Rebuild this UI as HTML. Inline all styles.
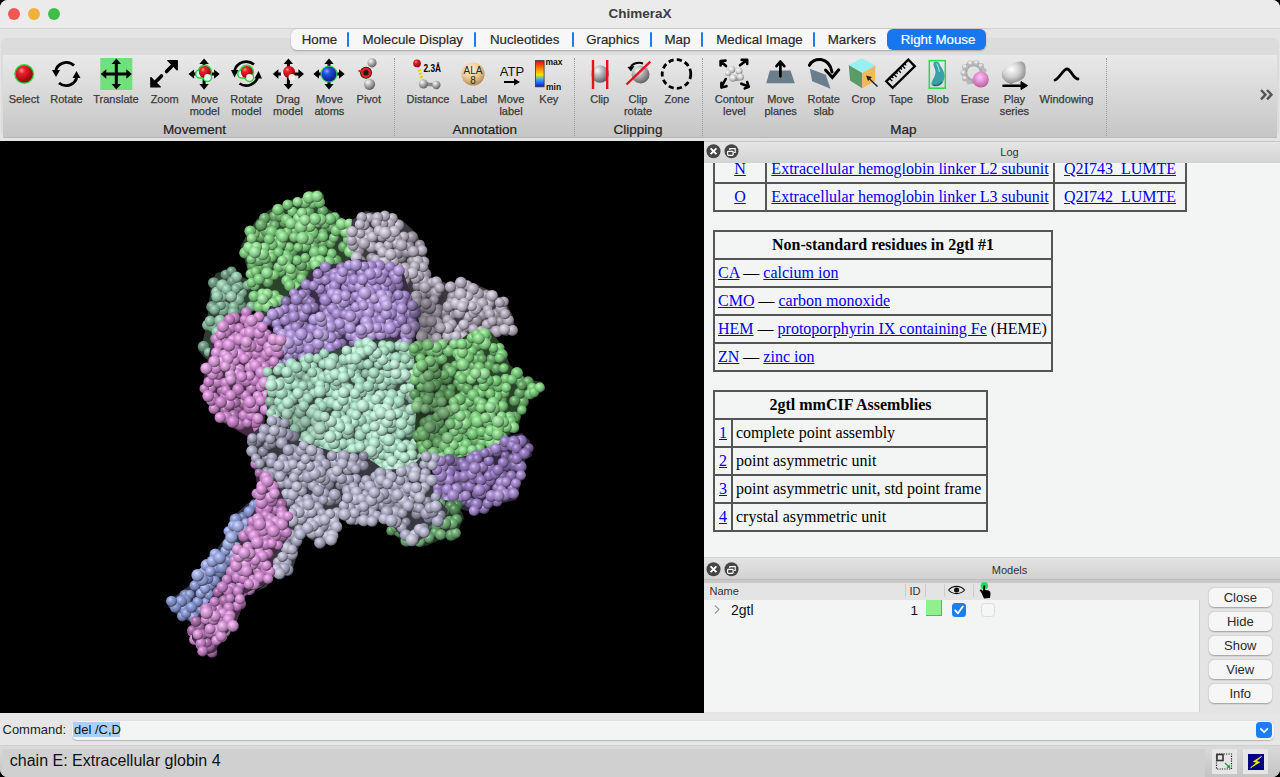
<!DOCTYPE html>
<html><head><meta charset="utf-8">
<style>
*{box-sizing:border-box;margin:0;padding:0}
html,body{width:1280px;height:777px;overflow:hidden;background:#000;font-family:"Liberation Sans",sans-serif}
.a{position:absolute}
#win{position:absolute;left:0;top:0;width:1280px;height:777px;background:#e6e6e6;border-radius:8px;overflow:hidden}
#title{left:0;top:0;width:1280px;height:29px;background:#ebebeb;border-bottom:1px solid #d2d2d2}
#title .t{left:0;width:1280px;top:6px;text-align:center;font-weight:bold;font-size:13.5px;color:#3c3c3c}
.tl{width:12px;height:12px;border-radius:50%;top:8px}
#tbar{left:0;top:29px;width:1280px;height:112px;background:#e4e4e4}
#tabbg{left:1px;top:38px;width:1278px;height:99px;background:#dcdcdc;border-radius:6px}
#panel{left:3px;top:55px;width:1274px;height:82.5px;background:linear-gradient(#e9e9e9,#c6c6c6);border-bottom:1.5px solid #b8b8b8}
#tabs{left:291px;top:29px;width:695px;height:21px;background:#f7f7f7;border-radius:6px;box-shadow:0 0.5px 1.5px rgba(0,0,0,0.25)}
.tab{top:2px;height:17px;line-height:17px;font-size:13.3px;color:#2a2a2a;-webkit-text-stroke:0.2px currentColor;text-align:center;white-space:nowrap}
.sep{top:3px;width:2px;height:15px;background:#1a7cf0;border-radius:1px}
.ic{font-size:11px;color:#3a3a3a;-webkit-text-stroke:0.25px #3a3a3a;text-align:center;line-height:12px;white-space:nowrap}
.grp{font-size:13.5px;color:#1e1e1e;-webkit-text-stroke:0.2px #1e1e1e;text-align:center}
.dsep{top:58px;height:78px;width:0;border-left:1px dotted #9a9a9a}
#gfx{left:0;top:141px;width:704px;height:572px;background:#000}
#log{left:704px;top:141px;width:576px;height:418px;background:#f2f5f4;overflow:hidden}
.ph{height:22px;width:576px;background:linear-gradient(#e6e6e6,#d3d3d3);font-size:11px;color:#333;line-height:21px}
.pbtn{width:14px;height:14px;border-radius:50%;background:#444;top:4px}
.mh{font-size:11px;color:#333}
.mb{width:62.5px;height:19px;background:#f6f6f6;border-radius:5px;box-shadow:0 0.5px 1.5px rgba(0,0,0,0.3);font-size:13px;color:#2a2a2a;text-align:center;line-height:19px}
</style></head><body>
<div id="win">
 <div id="title" class="a"><div class="a t">ChimeraX</div>
  <div class="a tl" style="left:8px;background:#ee5a52"></div>
  <div class="a tl" style="left:28px;background:#f0b23b"></div>
  <div class="a tl" style="left:48px;background:#3dbf48"></div>
 </div>
 <div id="tbar" class="a"></div>
 <div id="tabbg" class="a"></div>
 <div id="panel" class="a"></div>
 <div id="tabs" class="a"><div class="a sep" style="left:56.3px"></div><div class="a sep" style="left:183.4px"></div><div class="a sep" style="left:280.5px"></div><div class="a sep" style="left:359.2px"></div><div class="a sep" style="left:410.4px"></div><div class="a sep" style="left:522.4px"></div><div class="a tab" style="left:-31.6px;width:120px">Home</div><div class="a tab" style="left:61.7px;width:120px">Molecule Display</div><div class="a tab" style="left:173.7px;width:120px">Nucleotides</div><div class="a tab" style="left:261.8px;width:120px">Graphics</div><div class="a tab" style="left:326.4px;width:120px">Map</div><div class="a tab" style="left:408.5px;width:120px">Medical Image</div><div class="a tab" style="left:500.8px;width:120px">Markers</div><div class="a" style="left:596px;top:0;width:98.5px;height:21px;background:#1877ee;border-radius:6px"></div><div class="a tab" style="left:587.0px;width:120px;color:#fff">Right Mouse</div></div>
 <div class="a ic" style="left:-16.0px;width:80px;top:93px">Select</div><div class="a ic" style="left:26.5px;width:80px;top:93px">Rotate</div><div class="a ic" style="left:76.0px;width:80px;top:93px">Translate</div><div class="a ic" style="left:124.7px;width:80px;top:93px">Zoom</div><div class="a ic" style="left:164.7px;width:80px;top:93px">Move<br>model</div><div class="a ic" style="left:206.5px;width:80px;top:93px">Rotate<br>model</div><div class="a ic" style="left:248.0px;width:80px;top:93px">Drag<br>model</div><div class="a ic" style="left:289.4px;width:80px;top:93px">Move<br>atoms</div><div class="a ic" style="left:328.8px;width:80px;top:93px">Pivot</div><div class="a ic" style="left:388.0px;width:80px;top:93px">Distance</div><div class="a ic" style="left:433.8px;width:80px;top:93px">Label</div><div class="a ic" style="left:471.0px;width:80px;top:93px">Move<br>label</div><div class="a ic" style="left:508.8px;width:80px;top:93px">Key</div><div class="a ic" style="left:559.7px;width:80px;top:93px">Clip</div><div class="a ic" style="left:598.0px;width:80px;top:93px">Clip<br>rotate</div><div class="a ic" style="left:637.0px;width:80px;top:93px">Zone</div><div class="a ic" style="left:694.4px;width:80px;top:93px">Contour<br>level</div><div class="a ic" style="left:740.6px;width:80px;top:93px">Move<br>planes</div><div class="a ic" style="left:783.8px;width:80px;top:93px">Rotate<br>slab</div><div class="a ic" style="left:823.4px;width:80px;top:93px">Crop</div><div class="a ic" style="left:861.0px;width:80px;top:93px">Tape</div><div class="a ic" style="left:897.8px;width:80px;top:93px">Blob</div><div class="a ic" style="left:935.0px;width:80px;top:93px">Erase</div><div class="a ic" style="left:974.4px;width:80px;top:93px">Play<br>series</div><div class="a ic" style="left:1026.5px;width:80px;top:93px">Windowing</div><div class="a grp" style="left:134.4px;width:120px;top:122px">Movement</div><div class="a grp" style="left:424.7px;width:120px;top:122px">Annotation</div><div class="a grp" style="left:578.0px;width:120px;top:122px">Clipping</div><div class="a grp" style="left:843.4px;width:120px;top:122px">Map</div><div class="a dsep" style="left:393.5px"></div><div class="a dsep" style="left:573.5px"></div><div class="a dsep" style="left:701.5px"></div><div class="a dsep" style="left:1106.0px"></div>
 <svg class="a" style="left:0;top:0" width="1280" height="141" viewBox="0 0 1280 141">
<defs>
 <radialGradient id="gred" cx="0.35" cy="0.3" r="0.75"><stop offset="0" stop-color="#ff9a9a"/><stop offset="0.25" stop-color="#f0202a"/><stop offset="1" stop-color="#8a0008"/></radialGradient>
 <radialGradient id="gblue" cx="0.35" cy="0.3" r="0.75"><stop offset="0" stop-color="#8aa8ff"/><stop offset="0.3" stop-color="#2450e0"/><stop offset="1" stop-color="#0a1a80"/></radialGradient>
 <radialGradient id="ggray" cx="0.35" cy="0.3" r="0.75"><stop offset="0" stop-color="#fafafa"/><stop offset="0.4" stop-color="#b8b8b8"/><stop offset="1" stop-color="#5a5a5a"/></radialGradient>
 <radialGradient id="gtan" cx="0.4" cy="0.3" r="0.8"><stop offset="0" stop-color="#fff4e0"/><stop offset="0.5" stop-color="#ecc890"/><stop offset="1" stop-color="#a07a48"/></radialGradient>
 <radialGradient id="gpink" cx="0.45" cy="0.35" r="0.7"><stop offset="0" stop-color="#f8c8f4"/><stop offset="0.45" stop-color="#e490d4"/><stop offset="1" stop-color="#a85890"/></radialGradient>
 <radialGradient id="gblob" cx="0.4" cy="0.35" r="0.7"><stop offset="0" stop-color="#ffffff"/><stop offset="0.5" stop-color="#d0d0d0"/><stop offset="1" stop-color="#808080"/></radialGradient>
 <linearGradient id="gkey" x1="0" y1="0" x2="0" y2="1"><stop offset="0" stop-color="#e80000"/><stop offset="0.32" stop-color="#ff8a00"/><stop offset="0.55" stop-color="#f2e600"/><stop offset="0.72" stop-color="#3aa8f0"/><stop offset="1" stop-color="#1010f0"/></linearGradient>
 <g id="arr4">
  <path d="M0,-11 L0,11 M-11,0 L11,0" stroke="#000" stroke-width="3" fill="none"/>
  <path d="M0,-15.6 L-4.7,-10 L4.7,-10 Z M0,15.6 L-4.7,10 L4.7,10 Z M-15.6,0 L-10,-4.7 L-10,4.7 Z M15.6,0 L10,-4.7 L10,4.7 Z" fill="#000"/>
 </g>
 <g id="mol">
  <circle cx="-4.5" cy="1.8" r="3.3" fill="#f2f2f2"/>
  <circle cx="0.5" cy="-0.2" r="6" fill="url(#gred)"/>
  <circle cx="3.2" cy="5.2" r="3.3" fill="#f0f0f0"/>
 </g>
 <g id="molg">
  <circle cx="-4.5" cy="1.8" r="4.8" fill="#24d84a"/>
  <circle cx="0.5" cy="-0.2" r="7.4" fill="#24d84a"/>
  <circle cx="3.2" cy="5.2" r="4.8" fill="#24d84a"/>
 </g>
</defs>
<!-- Select -->
<circle cx="24.2" cy="74" r="10" fill="#1fd640"/>
<circle cx="24.2" cy="74" r="8.6" fill="url(#gred)"/>
<!-- Rotate -->
<g fill="none" stroke="#000" stroke-width="2.8">
 <path d="M55.5,72 A11,11 0 0 1 74,65.5"/>
 <path d="M77,76 A11,11 0 0 1 59,83"/>
</g>
<path d="M52,70 L60,70 L56,77 Z" fill="#000"/>
<path d="M80.5,78 L72.5,78 L76.5,71 Z" fill="#000"/>
<!-- Translate -->
<rect x="100.3" y="58" width="32" height="32" fill="#6fe07c"/>
<use href="#arr4" x="116.3" y="74"/>
<!-- Zoom -->
<path d="M171.5,66.5 L166.5,71.5 M156.5,81 L161.5,76" stroke="#000" stroke-width="3.6" stroke-linecap="round"/>
<path d="M177.3,60.5 L177.3,70 L167.8,60.5 Z" fill="#000" stroke="#000" stroke-width="1.2" stroke-linejoin="round"/>
<path d="M150.8,87 L150.8,77.5 L160.3,87 Z" fill="#000" stroke="#000" stroke-width="1.2" stroke-linejoin="round"/>
<!-- Move model -->
<use href="#arr4" x="204.1" y="74.1"/>
<use href="#molg" x="204.3" y="72.2"/>
<use href="#mol" x="204.3" y="72.2"/>
<!-- Rotate model -->
<g fill="none" stroke="#000" stroke-width="2.7">
 <path d="M234.5,71 A12,12 0 0 1 254,64.5"/>
 <path d="M258,76 A12,12 0 0 1 239.5,83.5"/>
</g>
<path d="M231,70 L238.5,70 L234.5,77.5 Z" fill="#000"/>
<path d="M262,78.5 L254.5,78.5 L258.5,71 Z" fill="#000"/>
<use href="#molg" x="246.3" y="72.2"/>
<use href="#mol" x="246.3" y="72.2"/>
<!-- Drag model -->
<use href="#arr4" x="288.4" y="74"/>
<use href="#mol" x="288.6" y="72.2"/>
<!-- Move atoms -->
<use href="#arr4" x="329" y="74"/>
<circle cx="329" cy="74" r="8.6" fill="#24d84a"/>
<circle cx="329" cy="74" r="7.4" fill="url(#gblue)"/>
<!-- Pivot -->
<circle cx="372" cy="62.8" r="4.6" fill="url(#ggray)"/>
<circle cx="369.5" cy="84.3" r="5.6" fill="url(#ggray)"/>
<circle cx="366" cy="72.7" r="6" fill="#1a1a1a"/>
<circle cx="366" cy="72.7" r="3.9" fill="none" stroke="#ee1820" stroke-width="2.6"/>
<circle cx="366" cy="72.7" r="1.2" fill="#1a1a1a"/>
<path d="M358.5,71 L363,71" stroke="#ee1820" stroke-width="2.2"/>
<!-- Distance -->
<path d="M418,66 L423,82" stroke="#e6d000" stroke-width="3" stroke-dasharray="2,1.5"/>
<path d="M423.4,84 L436.3,85" stroke="#888" stroke-width="3.5"/>
<circle cx="423.4" cy="84" r="4.6" fill="url(#ggray)"/>
<circle cx="436.3" cy="85" r="4.2" fill="url(#ggray)"/>
<circle cx="417" cy="63.4" r="3.8" fill="url(#gred)"/>
<text x="423.5" y="72" font-family="Liberation Sans" font-weight="bold" font-size="10" fill="#000" textLength="17.5" lengthAdjust="spacingAndGlyphs">2.3Å</text>
<!-- Label -->
<circle cx="473" cy="74" r="11.6" fill="url(#gtan)"/>
<text x="473" y="73.5" font-family="Liberation Sans" font-size="10" fill="#2a2a2a" text-anchor="middle">ALA</text>
<text x="473" y="84" font-family="Liberation Sans" font-size="10" fill="#2a2a2a" text-anchor="middle">8</text>
<!-- Move label -->
<text x="512" y="76" font-family="Liberation Sans" font-size="13" fill="#111" text-anchor="middle">ATP</text>
<path d="M504,82 L515,82" stroke="#000" stroke-width="2"/>
<path d="M520,82 L514,78.5 L514,85.5 Z" fill="#000"/>
<!-- Key -->
<rect x="535.5" y="60.6" width="8.6" height="26.2" fill="url(#gkey)" stroke="#333" stroke-width="0.8"/>
<text x="545.5" y="64.8" font-family="Liberation Sans" font-weight="bold" font-size="8.5" fill="#111">max</text>
<text x="546" y="90" font-family="Liberation Sans" font-weight="bold" font-size="8.5" fill="#111">min</text>
<!-- Clip -->
<circle cx="600" cy="74" r="8.8" fill="url(#ggray)"/>
<path d="M593,60 L593,89 M607.2,60 L607.2,89" stroke="#e8101c" stroke-width="2.4"/>
<!-- Clip rotate -->
<circle cx="640.5" cy="74.5" r="9" fill="url(#ggray)"/>
<path d="M626.5,84.5 L650.3,61.7" stroke="#e8101c" stroke-width="2.4"/>
<path d="M631,68 A8,5 0 0 1 643,63.5" fill="none" stroke="#000" stroke-width="2"/>
<path d="M627.5,67 L634.5,66 L631,71.5 Z" fill="#000"/>
<!-- Zone -->
<circle cx="676.5" cy="74" r="14.3" fill="none" stroke="#000" stroke-width="2.8" stroke-dasharray="5.2,3.2"/>
<!-- Contour level -->
<g fill="url(#gblob)">
 <ellipse cx="735" cy="74" rx="8" ry="6" transform="rotate(40 735 74)"/>
 <circle cx="731.5" cy="69.5" r="3.8"/><circle cx="739" cy="71" r="3.6"/><circle cx="733" cy="78" r="3.8"/><circle cx="740.5" cy="77" r="3.5"/><circle cx="728" cy="73" r="3"/>
</g>
<g stroke="#000" stroke-width="2.6" fill="none" stroke-linecap="round" stroke-linejoin="round">
 <path d="M721.4,61.8 L726,66 M720.6,65.5 L720.6,61 L725.5,60.6"/>
 <path d="M747,60 L740,65.3 M741.7,59.9 L747.2,59.9 L747.2,64"/>
 <path d="M725.7,79 L721.4,87 M721.4,82.9 L721.4,87.6 L726.5,86.2"/>
 <path d="M741.3,83.7 L748.5,86.5 M744.8,88.4 L748.75,86.8 L747.2,82.1"/>
</g>
<!-- Move planes -->
<path d="M769.8,70.4 L790.5,70.4 L794.8,83.3 L766.3,83.3 Z" fill="#6a7e8c"/>
<path d="M780.4,62 L780.4,76.3 M776.5,66.1 L780.4,61.5 L784.3,66.1" stroke="#000" stroke-width="2.7" fill="none" stroke-linecap="round" stroke-linejoin="round"/>
<!-- Rotate slab -->
<path d="M809.8,68.7 L825.8,74.7 L830.5,88.8 L812.2,81.3 Z" fill="#6a7e8c"/>
<path d="M809.4,65.4 C813,57 829,56 832,72" fill="none" stroke="#000" stroke-width="3" stroke-linecap="round"/>
<path d="M825.5,70 L832.3,77.5 L838.7,69.8" fill="none" stroke="#000" stroke-width="3" stroke-linecap="round" stroke-linejoin="miter"/>
<!-- Crop -->
<path d="M848.7,64.9 L861.9,58.3 L875.4,65.4 L862.3,72.9 Z" fill="#98f0f0"/>
<path d="M848.7,64.9 L862.3,72.9 L862.3,88.3 L850.1,80.8 Z" fill="#5c9a68"/>
<path d="M875.4,65.4 L862.3,72.9 L862.3,88.3 L875,81.3 Z" fill="#f5b858"/>
<path d="M868.5,78 L877.5,86.5" stroke="#222" stroke-width="1.4"/>
<path d="M866,75.5 L872,77 L868,81 Z" fill="#222"/>
<!-- Tape -->
<g transform="translate(900.5,73.8) rotate(-44.5)">
 <rect x="-15.5" y="-4.6" width="31" height="9.2" fill="none" stroke="#000" stroke-width="2.3"/>
 <path d="M-11,-4.6 L-11,-0.5 M-8,-4.6 L-8,-2 M-5,-4.6 L-5,-0.5 M-2,-4.6 L-2,-2 M1,-4.6 L1,-0.5 M4,-4.6 L4,-2 M7,-4.6 L7,-0.5 M10,-4.6 L10,-2" stroke="#000" stroke-width="1.3"/>
</g>
<!-- Blob -->
<rect x="929.3" y="60.6" width="16" height="27.6" fill="none" stroke="#22dd44" stroke-width="1.5"/>
<path d="M934,62 C937,60.5 939,62 940,65 C942,69 945,72 944.5,77 C944,82 941,86 937,86.3 C934,86.5 931,86 931.5,83 C932,80 935,77 935.5,73 C936,69 932,65 934,62 Z" fill="#3aa0a8"/>
<path d="M936.8,63.5 C938,66 939,69 939.5,72" stroke="#c0f0f4" stroke-width="0.9" fill="none"/>
<path d="M933,85 C936,86 940,85 942,82" stroke="#1a5a60" stroke-width="1.2" fill="none"/>
<!-- Erase -->
<circle cx="973.5" cy="72.5" r="8.8" fill="none" stroke="#a8a8a8" stroke-width="5"/>
<g fill="#b8b8b8">
 <circle cx="970" cy="63.5" r="3"/><circle cx="976" cy="63" r="3"/><circle cx="981" cy="66" r="3"/><circle cx="984" cy="70.5" r="2.5"/><circle cx="965" cy="67" r="3"/><circle cx="963.5" cy="73" r="3"/><circle cx="965" cy="78.5" r="3"/><circle cx="969" cy="82" r="2.5"/>
</g>
<g fill="#e6e6e6">
 <circle cx="970" cy="62.5" r="1.8"/><circle cx="976" cy="62" r="1.8"/><circle cx="964.5" cy="66" r="1.8"/><circle cx="963" cy="72" r="1.8"/><circle cx="964.5" cy="77.5" r="1.6"/><circle cx="980.5" cy="65" r="1.6"/>
</g>
<circle cx="980.8" cy="79.5" r="8" fill="url(#gpink)"/>
<!-- Play series -->
<path d="M1002,77 C1001,71 1004,67 1009,66 C1012,63 1017,61.5 1021,61.5 C1025,62 1026,66 1025.5,70 C1026,74 1025,78 1021,80 C1017,82 1014,82 1012,84 C1009,84 1005,82 1002,77 Z" fill="url(#gblob)"/>
<path d="M1003.5,85.8 L1023,85.8" stroke="#000" stroke-width="2.6" stroke-linecap="round"/>
<path d="M1027.5,85.6 L1021,81.6 L1021,89.6 Z" fill="#000" stroke="#000" stroke-width="1" stroke-linejoin="round"/>
<!-- Windowing -->
<path d="M1055,80 C1060,78 1063,69 1067,69 C1071,69 1073,79 1078,79" fill="none" stroke="#000" stroke-width="2.8" stroke-linecap="round"/>
<!-- chevrons -->
<path d="M1261,90 L1265.5,94.7 L1261,99.4 M1267,90 L1271.5,94.7 L1267,99.4" fill="none" stroke="#555" stroke-width="2.4"/>
</svg>
 <div id="gfx" class="a"><svg class="a" style="left:0;top:0" width="704" height="572" viewBox="0 141 704 572"><defs><radialGradient id="smintL0" cx="0.38" cy="0.33" r="0.68"><stop offset="0" stop-color="#bad1c4"/><stop offset="0.3" stop-color="#76a389"/><stop offset="0.75" stop-color="#587a66"/><stop offset="1" stop-color="#2f4136"/></radialGradient><radialGradient id="smintL1" cx="0.38" cy="0.33" r="0.68"><stop offset="0" stop-color="#c5e0d1"/><stop offset="0.3" stop-color="#8cc1a3"/><stop offset="0.75" stop-color="#69907a"/><stop offset="1" stop-color="#384d41"/></radialGradient><radialGradient id="smintL2" cx="0.38" cy="0.33" r="0.68"><stop offset="0" stop-color="#cde7d8"/><stop offset="0.3" stop-color="#9cd0b2"/><stop offset="0.75" stop-color="#759c85"/><stop offset="1" stop-color="#3e5347"/></radialGradient><radialGradient id="smintL3" cx="0.38" cy="0.33" r="0.68"><stop offset="0" stop-color="#d3eadc"/><stop offset="0.3" stop-color="#a7d5ba"/><stop offset="0.75" stop-color="#7d9f8b"/><stop offset="1" stop-color="#42554a"/></radialGradient><radialGradient id="sgreenT0" cx="0.38" cy="0.33" r="0.68"><stop offset="0" stop-color="#b8dab8"/><stop offset="0.3" stop-color="#71b671"/><stop offset="0.75" stop-color="#548854"/><stop offset="1" stop-color="#2d482d"/></radialGradient><radialGradient id="sgreenT1" cx="0.38" cy="0.33" r="0.68"><stop offset="0" stop-color="#c2ebc2"/><stop offset="0.3" stop-color="#86d886"/><stop offset="0.75" stop-color="#64a264"/><stop offset="1" stop-color="#355635"/></radialGradient><radialGradient id="sgreenT2" cx="0.38" cy="0.33" r="0.68"><stop offset="0" stop-color="#cbf2cb"/><stop offset="0.3" stop-color="#97e697"/><stop offset="0.75" stop-color="#71ac71"/><stop offset="1" stop-color="#3c5c3c"/></radialGradient><radialGradient id="sgreenT3" cx="0.38" cy="0.33" r="0.68"><stop offset="0" stop-color="#d0f3d0"/><stop offset="0.3" stop-color="#a2e8a2"/><stop offset="0.75" stop-color="#79ae79"/><stop offset="1" stop-color="#405c40"/></radialGradient><radialGradient id="sgrayT0" cx="0.38" cy="0.33" r="0.68"><stop offset="0" stop-color="#d0cdd4"/><stop offset="0.3" stop-color="#a19ba9"/><stop offset="0.75" stop-color="#78747e"/><stop offset="1" stop-color="#403e43"/></radialGradient><radialGradient id="sgrayT1" cx="0.38" cy="0.33" r="0.68"><stop offset="0" stop-color="#dfdbe4"/><stop offset="0.3" stop-color="#bfb8c9"/><stop offset="0.75" stop-color="#8f8a96"/><stop offset="1" stop-color="#4c4950"/></radialGradient><radialGradient id="sgrayT2" cx="0.38" cy="0.33" r="0.68"><stop offset="0" stop-color="#e6e2eb"/><stop offset="0.3" stop-color="#cec6d7"/><stop offset="0.75" stop-color="#9a94a1"/><stop offset="1" stop-color="#524f56"/></radialGradient><radialGradient id="sgrayT3" cx="0.38" cy="0.33" r="0.68"><stop offset="0" stop-color="#e9e5ed"/><stop offset="0.3" stop-color="#d3ccdb"/><stop offset="0.75" stop-color="#9e99a4"/><stop offset="1" stop-color="#545157"/></radialGradient><radialGradient id="spurpleT0" cx="0.38" cy="0.33" r="0.68"><stop offset="0" stop-color="#c9bddb"/><stop offset="0.3" stop-color="#937bb8"/><stop offset="0.75" stop-color="#6e5c8a"/><stop offset="1" stop-color="#3a3149"/></radialGradient><radialGradient id="spurpleT1" cx="0.38" cy="0.33" r="0.68"><stop offset="0" stop-color="#d6c8ec"/><stop offset="0.3" stop-color="#ae92da"/><stop offset="0.75" stop-color="#826da3"/><stop offset="1" stop-color="#453a57"/></radialGradient><radialGradient id="spurpleT2" cx="0.38" cy="0.33" r="0.68"><stop offset="0" stop-color="#ded0f3"/><stop offset="0.3" stop-color="#bda2e8"/><stop offset="0.75" stop-color="#8d79ae"/><stop offset="1" stop-color="#4b405c"/></radialGradient><radialGradient id="spurpleT3" cx="0.38" cy="0.33" r="0.68"><stop offset="0" stop-color="#e1d5f4"/><stop offset="0.3" stop-color="#c4acea"/><stop offset="0.75" stop-color="#9381af"/><stop offset="1" stop-color="#4e445d"/></radialGradient><radialGradient id="spinkL0" cx="0.38" cy="0.33" r="0.68"><stop offset="0" stop-color="#d8b9d8"/><stop offset="0.3" stop-color="#b174b1"/><stop offset="0.75" stop-color="#845784"/><stop offset="1" stop-color="#462e46"/></radialGradient><radialGradient id="spinkL1" cx="0.38" cy="0.33" r="0.68"><stop offset="0" stop-color="#e8c4e8"/><stop offset="0.3" stop-color="#d28ad2"/><stop offset="0.75" stop-color="#9d679d"/><stop offset="1" stop-color="#543754"/></radialGradient><radialGradient id="spinkL2" cx="0.38" cy="0.33" r="0.68"><stop offset="0" stop-color="#efccef"/><stop offset="0.3" stop-color="#e09ae0"/><stop offset="0.75" stop-color="#a873a8"/><stop offset="1" stop-color="#593d59"/></radialGradient><radialGradient id="spinkL3" cx="0.38" cy="0.33" r="0.68"><stop offset="0" stop-color="#f1d2f1"/><stop offset="0.3" stop-color="#e3a5e3"/><stop offset="0.75" stop-color="#aa7baa"/><stop offset="1" stop-color="#5a425a"/></radialGradient><radialGradient id="smintC0" cx="0.38" cy="0.33" r="0.68"><stop offset="0" stop-color="#c9dfd4"/><stop offset="0.3" stop-color="#93c0a9"/><stop offset="0.75" stop-color="#6e907e"/><stop offset="1" stop-color="#3a4c43"/></radialGradient><radialGradient id="smintC1" cx="0.38" cy="0.33" r="0.68"><stop offset="0" stop-color="#d6f1e4"/><stop offset="0.3" stop-color="#aee4c9"/><stop offset="0.75" stop-color="#82ab96"/><stop offset="1" stop-color="#455b50"/></radialGradient><radialGradient id="smintC2" cx="0.38" cy="0.33" r="0.68"><stop offset="0" stop-color="#def8eb"/><stop offset="0.3" stop-color="#bdf1d7"/><stop offset="0.75" stop-color="#8db4a1"/><stop offset="1" stop-color="#4b6056"/></radialGradient><radialGradient id="smintC3" cx="0.38" cy="0.33" r="0.68"><stop offset="0" stop-color="#e1f8ed"/><stop offset="0.3" stop-color="#c4f2db"/><stop offset="0.75" stop-color="#93b5a4"/><stop offset="1" stop-color="#4e6057"/></radialGradient><radialGradient id="sgreenR0" cx="0.38" cy="0.33" r="0.68"><stop offset="0" stop-color="#b5d9b5"/><stop offset="0.3" stop-color="#6cb36c"/><stop offset="0.75" stop-color="#518651"/><stop offset="1" stop-color="#2b472b"/></radialGradient><radialGradient id="sgreenR1" cx="0.38" cy="0.33" r="0.68"><stop offset="0" stop-color="#c0e9c0"/><stop offset="0.3" stop-color="#81d481"/><stop offset="0.75" stop-color="#609f60"/><stop offset="1" stop-color="#335433"/></radialGradient><radialGradient id="sgreenR2" cx="0.38" cy="0.33" r="0.68"><stop offset="0" stop-color="#c8f0c8"/><stop offset="0.3" stop-color="#91e291"/><stop offset="0.75" stop-color="#6ca96c"/><stop offset="1" stop-color="#3a5a3a"/></radialGradient><radialGradient id="sgreenR3" cx="0.38" cy="0.33" r="0.68"><stop offset="0" stop-color="#cef2ce"/><stop offset="0.3" stop-color="#9de59d"/><stop offset="0.75" stop-color="#75ab75"/><stop offset="1" stop-color="#3e5b3e"/></radialGradient><radialGradient id="spurpleR0" cx="0.38" cy="0.33" r="0.68"><stop offset="0" stop-color="#c1b5d4"/><stop offset="0.3" stop-color="#846ca9"/><stop offset="0.75" stop-color="#63517e"/><stop offset="1" stop-color="#342b43"/></radialGradient><radialGradient id="spurpleR1" cx="0.38" cy="0.33" r="0.68"><stop offset="0" stop-color="#cec0e4"/><stop offset="0.3" stop-color="#9d81c9"/><stop offset="0.75" stop-color="#756096"/><stop offset="1" stop-color="#3e3350"/></radialGradient><radialGradient id="spurpleR2" cx="0.38" cy="0.33" r="0.68"><stop offset="0" stop-color="#d6c8eb"/><stop offset="0.3" stop-color="#ad91d7"/><stop offset="0.75" stop-color="#816ca1"/><stop offset="1" stop-color="#453a56"/></radialGradient><radialGradient id="spurpleR3" cx="0.38" cy="0.33" r="0.68"><stop offset="0" stop-color="#daceed"/><stop offset="0.3" stop-color="#b69ddb"/><stop offset="0.75" stop-color="#8875a4"/><stop offset="1" stop-color="#483e57"/></radialGradient><radialGradient id="sgreenB0" cx="0.38" cy="0.33" r="0.68"><stop offset="0" stop-color="#aac5ad"/><stop offset="0.3" stop-color="#568c5b"/><stop offset="0.75" stop-color="#406944"/><stop offset="1" stop-color="#223824"/></radialGradient><radialGradient id="sgreenB1" cx="0.38" cy="0.33" r="0.68"><stop offset="0" stop-color="#b2d3b5"/><stop offset="0.3" stop-color="#66a76c"/><stop offset="0.75" stop-color="#4c7d51"/><stop offset="1" stop-color="#28422b"/></radialGradient><radialGradient id="sgreenB2" cx="0.38" cy="0.33" r="0.68"><stop offset="0" stop-color="#bbdabe"/><stop offset="0.3" stop-color="#77b67d"/><stop offset="0.75" stop-color="#59885d"/><stop offset="1" stop-color="#2f4832"/></radialGradient><radialGradient id="sgreenB3" cx="0.38" cy="0.33" r="0.68"><stop offset="0" stop-color="#c2dec5"/><stop offset="0.3" stop-color="#86be8b"/><stop offset="0.75" stop-color="#648e68"/><stop offset="1" stop-color="#354c37"/></radialGradient><radialGradient id="sgrayB0" cx="0.38" cy="0.33" r="0.68"><stop offset="0" stop-color="#cacad5"/><stop offset="0.3" stop-color="#9696ab"/><stop offset="0.75" stop-color="#707080"/><stop offset="1" stop-color="#3c3c44"/></radialGradient><radialGradient id="sgrayB1" cx="0.38" cy="0.33" r="0.68"><stop offset="0" stop-color="#d8d8e5"/><stop offset="0.3" stop-color="#b2b2cb"/><stop offset="0.75" stop-color="#858598"/><stop offset="1" stop-color="#474751"/></radialGradient><radialGradient id="sgrayB2" cx="0.38" cy="0.33" r="0.68"><stop offset="0" stop-color="#e0e0ec"/><stop offset="0.3" stop-color="#c1c1d9"/><stop offset="0.75" stop-color="#9090a2"/><stop offset="1" stop-color="#4d4d56"/></radialGradient><radialGradient id="sgrayB3" cx="0.38" cy="0.33" r="0.68"><stop offset="0" stop-color="#e3e3ee"/><stop offset="0.3" stop-color="#c8c8dd"/><stop offset="0.75" stop-color="#9696a5"/><stop offset="1" stop-color="#505058"/></radialGradient><radialGradient id="sblue0" cx="0.38" cy="0.33" r="0.68"><stop offset="0" stop-color="#bcc2dc"/><stop offset="0.3" stop-color="#7986b9"/><stop offset="0.75" stop-color="#5a648a"/><stop offset="1" stop-color="#30354a"/></radialGradient><radialGradient id="sblue1" cx="0.38" cy="0.33" r="0.68"><stop offset="0" stop-color="#c7cfed"/><stop offset="0.3" stop-color="#909fdc"/><stop offset="0.75" stop-color="#6c77a5"/><stop offset="1" stop-color="#393f58"/></radialGradient><radialGradient id="sblue2" cx="0.38" cy="0.33" r="0.68"><stop offset="0" stop-color="#cfd6f4"/><stop offset="0.3" stop-color="#a0aee9"/><stop offset="0.75" stop-color="#7882ae"/><stop offset="1" stop-color="#40455d"/></radialGradient><radialGradient id="sblue3" cx="0.38" cy="0.33" r="0.68"><stop offset="0" stop-color="#d4dbf5"/><stop offset="0.3" stop-color="#aab7ec"/><stop offset="0.75" stop-color="#7f89b1"/><stop offset="1" stop-color="#44495e"/></radialGradient><radialGradient id="spinkL20" cx="0.38" cy="0.33" r="0.68"><stop offset="0" stop-color="#d8b9d8"/><stop offset="0.3" stop-color="#b174b1"/><stop offset="0.75" stop-color="#845784"/><stop offset="1" stop-color="#462e46"/></radialGradient><radialGradient id="spinkL21" cx="0.38" cy="0.33" r="0.68"><stop offset="0" stop-color="#e8c4e8"/><stop offset="0.3" stop-color="#d28ad2"/><stop offset="0.75" stop-color="#9d679d"/><stop offset="1" stop-color="#543754"/></radialGradient><radialGradient id="spinkL22" cx="0.38" cy="0.33" r="0.68"><stop offset="0" stop-color="#efccef"/><stop offset="0.3" stop-color="#e09ae0"/><stop offset="0.75" stop-color="#a873a8"/><stop offset="1" stop-color="#593d59"/></radialGradient><radialGradient id="spinkL23" cx="0.38" cy="0.33" r="0.68"><stop offset="0" stop-color="#f1d2f1"/><stop offset="0.3" stop-color="#e3a5e3"/><stop offset="0.75" stop-color="#aa7baa"/><stop offset="1" stop-color="#5a425a"/></radialGradient></defs><polygon points="216,273 231,270 241,276 250,281 255,303 245,313 231,317 220,331 211,347 208,360 204,357 199,351 203,340 207,322 209,303 211,285" fill="#2c3d33"/><g fill="url(#smintL0)"><circle cx="225.8" cy="274.7" r="5.2"/><circle cx="237.3" cy="309.5" r="5.9"/><circle cx="213.7" cy="282.9" r="5.7"/><circle cx="232.7" cy="281.5" r="5.9"/><circle cx="212.1" cy="306.9" r="5.9"/><circle cx="231.6" cy="271.4" r="5.0"/><circle cx="241.4" cy="305.9" r="4.9"/><circle cx="203.6" cy="346.5" r="5.8"/><circle cx="215.4" cy="338.7" r="5.3"/></g><g fill="url(#smintL1)"><circle cx="241.9" cy="293.1" r="5.2"/><circle cx="224.8" cy="307.0" r="5.8"/><circle cx="238.8" cy="300.0" r="5.6"/><circle cx="223.3" cy="310.0" r="6.0"/><circle cx="208.6" cy="352.3" r="4.8"/><circle cx="233.8" cy="306.4" r="5.2"/><circle cx="238.9" cy="286.2" r="4.9"/><circle cx="207.6" cy="325.1" r="5.6"/><circle cx="233.3" cy="312.5" r="5.6"/><circle cx="213.0" cy="326.3" r="6.0"/><circle cx="210.1" cy="321.1" r="5.5"/><circle cx="247.6" cy="285.3" r="4.9"/><circle cx="251.3" cy="306.5" r="5.2"/><circle cx="235.7" cy="289.0" r="5.1"/><circle cx="220.8" cy="305.3" r="4.9"/><circle cx="214.7" cy="309.7" r="5.3"/></g><g fill="url(#smintL2)"><circle cx="224.1" cy="325.1" r="5.7"/><circle cx="236.6" cy="277.1" r="5.6"/><circle cx="216.9" cy="292.3" r="5.7"/><circle cx="222.5" cy="285.6" r="6.3"/><circle cx="222.2" cy="296.9" r="5.1"/><circle cx="226.7" cy="289.4" r="5.1"/><circle cx="220.1" cy="320.6" r="5.9"/><circle cx="216.7" cy="331.7" r="5.2"/><circle cx="217.3" cy="296.5" r="6.0"/></g><g fill="url(#smintL3)"><circle cx="231.4" cy="296.6" r="5.6"/></g><polygon points="241,246 247,234 257,219 268,211 273,208 286,203 293,199 301,198 309,192 319,190 324,195 324,206 334,213 347,221 355,225 358,252 347,262 316,267 301,285 289,296 277,308 270,306 264,320 259,315 254,301 250,280 247,268" fill="#2a442a"/><g fill="url(#sgreenT0)"><circle cx="294.7" cy="272.7" r="5.5"/><circle cx="309.0" cy="212.1" r="5.6"/><circle cx="291.6" cy="252.3" r="6.0"/><circle cx="330.9" cy="226.9" r="5.3"/><circle cx="269.7" cy="225.8" r="6.0"/><circle cx="252.1" cy="265.7" r="5.0"/><circle cx="303.1" cy="272.9" r="5.7"/><circle cx="260.8" cy="267.6" r="5.6"/><circle cx="267.1" cy="266.1" r="6.0"/><circle cx="261.2" cy="236.7" r="5.5"/><circle cx="322.4" cy="243.7" r="5.6"/><circle cx="330.9" cy="243.7" r="4.8"/><circle cx="294.8" cy="231.9" r="5.2"/><circle cx="316.7" cy="238.1" r="5.8"/><circle cx="336.1" cy="261.0" r="5.9"/><circle cx="343.7" cy="247.0" r="5.7"/><circle cx="284.5" cy="222.6" r="5.1"/><circle cx="274.7" cy="216.3" r="5.6"/><circle cx="266.9" cy="231.4" r="6.0"/><circle cx="259.1" cy="261.0" r="5.3"/><circle cx="322.8" cy="211.1" r="5.4"/><circle cx="308.0" cy="265.8" r="5.5"/><circle cx="264.7" cy="218.3" r="5.6"/><circle cx="313.7" cy="247.1" r="5.4"/><circle cx="261.3" cy="225.0" r="6.0"/><circle cx="323.2" cy="232.9" r="4.8"/><circle cx="280.5" cy="216.4" r="5.3"/><circle cx="274.7" cy="225.4" r="5.0"/><circle cx="268.2" cy="282.5" r="5.2"/><circle cx="301.6" cy="265.6" r="5.4"/></g><g fill="url(#sgreenT1)"><circle cx="274.8" cy="295.3" r="5.1"/><circle cx="289.2" cy="247.3" r="5.0"/><circle cx="333.9" cy="237.8" r="4.9"/><circle cx="275.6" cy="238.0" r="5.9"/><circle cx="331.7" cy="253.7" r="5.1"/><circle cx="280.5" cy="244.2" r="5.9"/><circle cx="271.8" cy="231.9" r="5.8"/><circle cx="254.7" cy="286.0" r="5.0"/><circle cx="305.8" cy="231.5" r="5.6"/><circle cx="287.2" cy="232.4" r="5.1"/><circle cx="286.7" cy="219.7" r="5.8"/><circle cx="328.8" cy="261.8" r="6.0"/><circle cx="250.6" cy="274.0" r="5.1"/><circle cx="278.1" cy="209.7" r="5.9"/><circle cx="312.7" cy="203.3" r="5.5"/><circle cx="348.1" cy="239.8" r="5.2"/><circle cx="352.5" cy="244.9" r="5.7"/><circle cx="251.5" cy="282.6" r="5.0"/><circle cx="334.9" cy="217.1" r="4.8"/><circle cx="254.8" cy="234.1" r="4.9"/><circle cx="291.9" cy="282.4" r="5.9"/><circle cx="291.3" cy="274.9" r="5.6"/><circle cx="324.9" cy="223.2" r="5.6"/><circle cx="258.5" cy="300.9" r="5.6"/><circle cx="259.0" cy="307.0" r="5.8"/><circle cx="271.2" cy="253.3" r="5.8"/><circle cx="296.9" cy="287.0" r="5.7"/><circle cx="301.5" cy="278.7" r="5.2"/><circle cx="280.6" cy="271.2" r="5.7"/><circle cx="297.1" cy="260.3" r="5.1"/><circle cx="255.4" cy="271.7" r="4.9"/><circle cx="259.0" cy="279.3" r="5.7"/><circle cx="314.9" cy="252.4" r="6.0"/><circle cx="272.3" cy="245.0" r="5.3"/><circle cx="330.3" cy="219.1" r="5.8"/><circle cx="245.0" cy="252.8" r="5.8"/><circle cx="271.7" cy="257.3" r="5.3"/><circle cx="278.6" cy="267.3" r="5.3"/><circle cx="319.4" cy="202.5" r="5.7"/><circle cx="250.2" cy="231.2" r="5.8"/><circle cx="292.5" cy="211.8" r="5.0"/><circle cx="286.2" cy="255.0" r="5.0"/><circle cx="322.8" cy="250.8" r="5.1"/><circle cx="312.6" cy="233.1" r="6.2"/><circle cx="274.3" cy="275.1" r="5.2"/><circle cx="286.9" cy="280.7" r="5.6"/><circle cx="323.0" cy="236.7" r="5.4"/><circle cx="294.3" cy="237.3" r="5.1"/><circle cx="305.1" cy="245.9" r="6.1"/><circle cx="254.1" cy="296.3" r="5.6"/><circle cx="287.7" cy="204.8" r="5.3"/><circle cx="305.2" cy="257.9" r="4.8"/><circle cx="336.3" cy="230.7" r="5.6"/><circle cx="305.1" cy="202.7" r="5.5"/><circle cx="280.8" cy="234.1" r="5.6"/><circle cx="287.4" cy="258.7" r="6.0"/><circle cx="251.2" cy="259.5" r="4.8"/><circle cx="279.6" cy="300.4" r="6.0"/><circle cx="265.1" cy="258.5" r="5.7"/><circle cx="355.3" cy="238.0" r="5.3"/><circle cx="289.8" cy="285.7" r="5.6"/><circle cx="269.2" cy="239.3" r="5.4"/><circle cx="278.5" cy="252.3" r="5.0"/><circle cx="298.2" cy="247.5" r="4.8"/></g><g fill="url(#sgreenT2)"><circle cx="345.4" cy="232.4" r="5.2"/><circle cx="267.0" cy="273.2" r="5.8"/><circle cx="273.0" cy="303.4" r="5.6"/><circle cx="249.3" cy="247.7" r="6.2"/><circle cx="308.2" cy="239.0" r="6.2"/><circle cx="318.2" cy="222.6" r="5.2"/><circle cx="298.7" cy="218.5" r="5.8"/><circle cx="314.5" cy="261.3" r="5.0"/><circle cx="309.0" cy="197.5" r="6.3"/><circle cx="309.7" cy="226.3" r="5.8"/><circle cx="264.5" cy="247.8" r="5.3"/><circle cx="286.0" cy="265.3" r="5.6"/><circle cx="341.5" cy="224.2" r="5.9"/><circle cx="350.2" cy="251.7" r="6.1"/><circle cx="319.9" cy="260.6" r="5.6"/><circle cx="262.7" cy="254.1" r="6.2"/><circle cx="251.9" cy="238.4" r="5.1"/><circle cx="256.7" cy="247.1" r="5.4"/><circle cx="282.4" cy="260.6" r="5.2"/><circle cx="351.8" cy="234.1" r="6.2"/><circle cx="320.5" cy="219.7" r="5.9"/><circle cx="317.1" cy="196.5" r="5.7"/><circle cx="290.7" cy="268.9" r="5.2"/><circle cx="283.0" cy="236.9" r="5.8"/><circle cx="315.0" cy="219.0" r="6.1"/><circle cx="301.9" cy="212.9" r="5.1"/><circle cx="291.1" cy="223.6" r="5.7"/><circle cx="349.3" cy="223.8" r="5.3"/><circle cx="356.9" cy="251.5" r="6.2"/><circle cx="262.2" cy="293.5" r="5.0"/><circle cx="267.5" cy="306.8" r="5.9"/><circle cx="297.6" cy="202.0" r="5.1"/><circle cx="301.0" cy="227.0" r="6.3"/><circle cx="315.8" cy="265.1" r="5.4"/><circle cx="267.2" cy="294.1" r="5.5"/><circle cx="302.5" cy="238.1" r="6.3"/></g><g fill="url(#sgreenT3)"><circle cx="305.0" cy="220.2" r="5.5"/><circle cx="262.8" cy="299.1" r="5.5"/><circle cx="255.0" cy="252.2" r="6.0"/></g><polygon points="352,220 366,211 383,214 402,220 417,234 426,257 431,277 451,285 468,281 491,291 505,302 512,314 516,331 507,336 496,334 468,334 457,342 442,345 420,345 414,305 400,288 395,270 357,262 350,240" fill="#3c3a3f"/><g fill="url(#sgrayT0)"><circle cx="453.1" cy="296.7" r="5.9"/><circle cx="401.4" cy="257.8" r="5.1"/><circle cx="425.5" cy="274.4" r="6.0"/><circle cx="419.9" cy="244.9" r="5.1"/><circle cx="411.8" cy="261.3" r="4.9"/><circle cx="490.2" cy="329.1" r="5.9"/><circle cx="450.9" cy="315.5" r="5.7"/><circle cx="412.0" cy="237.3" r="6.0"/><circle cx="496.3" cy="314.2" r="5.7"/><circle cx="486.0" cy="295.4" r="5.7"/><circle cx="444.2" cy="313.1" r="5.8"/><circle cx="433.9" cy="285.2" r="6.0"/><circle cx="359.0" cy="251.2" r="5.5"/><circle cx="500.5" cy="321.6" r="5.0"/><circle cx="417.5" cy="286.2" r="5.1"/><circle cx="360.8" cy="261.2" r="5.4"/><circle cx="398.0" cy="253.1" r="5.8"/><circle cx="451.0" cy="301.8" r="5.1"/><circle cx="406.9" cy="252.5" r="5.2"/><circle cx="429.7" cy="292.7" r="5.6"/><circle cx="472.1" cy="320.6" r="5.9"/><circle cx="482.4" cy="315.5" r="5.5"/><circle cx="438.0" cy="308.8" r="4.9"/><circle cx="476.5" cy="320.6" r="5.8"/><circle cx="409.4" cy="246.5" r="5.0"/><circle cx="371.8" cy="258.3" r="5.5"/></g><g fill="url(#sgrayT1)"><circle cx="465.1" cy="327.1" r="5.6"/><circle cx="368.8" cy="231.9" r="5.3"/><circle cx="421.7" cy="295.7" r="5.4"/><circle cx="403.8" cy="236.7" r="5.2"/><circle cx="424.3" cy="280.7" r="5.6"/><circle cx="396.7" cy="238.8" r="5.1"/><circle cx="431.7" cy="282.8" r="4.8"/><circle cx="477.7" cy="293.9" r="6.1"/><circle cx="410.4" cy="300.3" r="5.9"/><circle cx="474.2" cy="302.0" r="5.8"/><circle cx="425.1" cy="287.5" r="5.8"/><circle cx="435.9" cy="292.7" r="5.7"/><circle cx="428.9" cy="336.0" r="5.9"/><circle cx="366.9" cy="239.1" r="5.0"/><circle cx="489.3" cy="303.6" r="5.2"/><circle cx="396.0" cy="243.5" r="5.1"/><circle cx="381.9" cy="237.0" r="4.8"/><circle cx="358.6" cy="240.1" r="5.3"/><circle cx="448.2" cy="306.6" r="5.7"/><circle cx="436.3" cy="282.1" r="5.8"/><circle cx="423.9" cy="262.1" r="5.6"/><circle cx="398.2" cy="225.5" r="5.9"/><circle cx="392.3" cy="218.4" r="5.5"/><circle cx="482.4" cy="303.4" r="5.7"/><circle cx="405.0" cy="268.5" r="6.0"/><circle cx="369.2" cy="217.9" r="5.0"/><circle cx="389.5" cy="223.7" r="5.7"/><circle cx="487.7" cy="309.8" r="4.9"/><circle cx="512.4" cy="330.4" r="5.6"/><circle cx="458.4" cy="286.7" r="5.5"/><circle cx="388.2" cy="245.3" r="5.1"/><circle cx="424.1" cy="307.8" r="5.1"/><circle cx="473.4" cy="329.2" r="5.2"/><circle cx="419.0" cy="276.0" r="5.4"/><circle cx="501.3" cy="308.4" r="5.8"/><circle cx="418.0" cy="315.8" r="5.6"/><circle cx="489.8" cy="314.1" r="5.0"/><circle cx="468.3" cy="317.0" r="5.2"/><circle cx="473.3" cy="313.1" r="5.1"/><circle cx="401.5" cy="245.2" r="5.9"/><circle cx="399.3" cy="279.4" r="4.8"/><circle cx="433.9" cy="300.2" r="4.9"/><circle cx="360.4" cy="233.6" r="4.8"/><circle cx="503.7" cy="301.7" r="5.2"/><circle cx="353.1" cy="245.9" r="5.1"/><circle cx="376.0" cy="260.0" r="5.5"/><circle cx="431.7" cy="330.6" r="4.8"/><circle cx="417.5" cy="261.4" r="6.0"/><circle cx="439.6" cy="288.0" r="5.3"/><circle cx="496.7" cy="331.4" r="6.0"/><circle cx="416.3" cy="296.5" r="5.9"/><circle cx="364.3" cy="225.0" r="5.3"/><circle cx="436.2" cy="313.2" r="6.0"/><circle cx="371.4" cy="246.9" r="5.9"/><circle cx="423.2" cy="267.2" r="4.9"/><circle cx="467.2" cy="285.4" r="5.1"/><circle cx="508.5" cy="320.5" r="5.5"/><circle cx="487.1" cy="324.5" r="5.3"/><circle cx="492.2" cy="321.3" r="4.9"/><circle cx="447.5" cy="320.0" r="5.3"/><circle cx="472.9" cy="289.0" r="6.0"/><circle cx="461.0" cy="282.8" r="6.0"/><circle cx="458.7" cy="329.2" r="4.8"/><circle cx="389.6" cy="266.5" r="6.1"/><circle cx="397.3" cy="267.7" r="5.6"/><circle cx="451.9" cy="324.3" r="5.1"/><circle cx="450.5" cy="286.9" r="5.6"/><circle cx="351.4" cy="240.5" r="5.3"/><circle cx="394.2" cy="261.7" r="5.0"/><circle cx="481.3" cy="331.2" r="5.4"/><circle cx="414.8" cy="266.5" r="5.3"/><circle cx="459.5" cy="313.0" r="5.9"/><circle cx="382.9" cy="223.6" r="5.5"/><circle cx="463.6" cy="336.3" r="5.0"/><circle cx="499.7" cy="302.6" r="5.1"/><circle cx="415.7" cy="278.7" r="5.0"/><circle cx="505.2" cy="314.1" r="5.1"/><circle cx="422.1" cy="250.5" r="5.4"/><circle cx="384.8" cy="216.0" r="5.4"/><circle cx="377.5" cy="217.8" r="5.7"/><circle cx="413.4" cy="251.5" r="5.6"/><circle cx="361.7" cy="217.4" r="5.3"/><circle cx="364.2" cy="243.5" r="5.9"/><circle cx="417.4" cy="302.5" r="5.6"/><circle cx="404.6" cy="280.4" r="5.4"/><circle cx="376.3" cy="223.2" r="5.1"/></g><g fill="url(#sgrayT2)"><circle cx="468.2" cy="296.3" r="5.0"/><circle cx="447.9" cy="336.3" r="5.7"/><circle cx="384.8" cy="261.2" r="6.0"/><circle cx="420.3" cy="329.1" r="6.1"/><circle cx="356.4" cy="257.6" r="5.9"/><circle cx="463.8" cy="324.6" r="5.4"/><circle cx="426.5" cy="317.5" r="5.7"/><circle cx="456.3" cy="303.6" r="6.1"/><circle cx="390.3" cy="237.1" r="5.3"/><circle cx="432.2" cy="344.3" r="6.1"/><circle cx="429.8" cy="307.8" r="6.3"/><circle cx="379.6" cy="247.1" r="5.1"/><circle cx="475.7" cy="308.8" r="5.9"/><circle cx="412.4" cy="273.1" r="5.8"/><circle cx="492.1" cy="295.7" r="5.8"/><circle cx="394.3" cy="231.5" r="5.8"/><circle cx="460.6" cy="294.1" r="6.1"/><circle cx="352.1" cy="231.6" r="5.6"/><circle cx="372.4" cy="237.0" r="5.3"/><circle cx="456.1" cy="336.2" r="5.3"/><circle cx="443.3" cy="344.6" r="5.7"/><circle cx="382.6" cy="252.2" r="5.2"/><circle cx="402.8" cy="274.1" r="6.3"/><circle cx="471.8" cy="306.3" r="5.0"/><circle cx="390.6" cy="254.6" r="5.8"/><circle cx="425.8" cy="327.8" r="6.3"/><circle cx="426.9" cy="344.5" r="5.8"/><circle cx="426.3" cy="303.8" r="5.6"/><circle cx="379.0" cy="230.7" r="5.4"/><circle cx="436.7" cy="337.9" r="5.3"/><circle cx="359.8" cy="224.4" r="5.0"/><circle cx="424.4" cy="321.8" r="6.0"/><circle cx="464.1" cy="302.8" r="5.2"/><circle cx="422.0" cy="336.2" r="6.3"/></g><g fill="url(#sgrayT3)"><circle cx="504.4" cy="329.4" r="5.5"/><circle cx="447.7" cy="328.0" r="5.8"/><circle cx="437.0" cy="322.8" r="5.8"/><circle cx="385.2" cy="233.1" r="6.3"/><circle cx="431.4" cy="321.6" r="5.6"/><circle cx="462.3" cy="306.6" r="5.5"/><circle cx="440.4" cy="327.8" r="5.4"/></g><polygon points="264,320 270,306 278,308 289,296 301,285 316,267 346,262 358,259 380,263 402,268 414,305 420,325 411,350 390,338 346,347 301,360 267,369 273,370 280,359 282,338" fill="#372e45"/><g fill="url(#spurpleT0)"><circle cx="306.1" cy="292.8" r="4.8"/><circle cx="291.9" cy="320.2" r="5.2"/><circle cx="341.5" cy="267.7" r="5.6"/><circle cx="342.0" cy="343.5" r="4.7"/><circle cx="337.8" cy="334.5" r="5.2"/><circle cx="306.3" cy="299.6" r="5.6"/><circle cx="310.5" cy="302.4" r="5.4"/><circle cx="324.0" cy="307.8" r="4.8"/><circle cx="354.1" cy="342.7" r="5.3"/><circle cx="295.5" cy="355.2" r="4.9"/><circle cx="351.6" cy="299.9" r="5.0"/><circle cx="285.9" cy="301.4" r="5.1"/><circle cx="285.9" cy="362.9" r="5.1"/><circle cx="351.1" cy="273.4" r="4.8"/><circle cx="328.8" cy="273.9" r="5.3"/><circle cx="287.0" cy="316.7" r="5.5"/><circle cx="300.4" cy="309.5" r="6.0"/><circle cx="322.4" cy="294.0" r="4.8"/><circle cx="338.1" cy="327.2" r="4.8"/><circle cx="304.8" cy="326.7" r="4.9"/><circle cx="397.8" cy="285.3" r="5.8"/><circle cx="323.2" cy="350.1" r="6.0"/><circle cx="298.9" cy="322.7" r="5.5"/><circle cx="390.5" cy="287.9" r="5.8"/><circle cx="342.7" cy="330.5" r="5.3"/><circle cx="313.7" cy="307.6" r="5.4"/><circle cx="376.5" cy="316.0" r="5.8"/></g><g fill="url(#spurpleT1)"><circle cx="370.3" cy="286.2" r="5.0"/><circle cx="369.4" cy="303.0" r="5.6"/><circle cx="312.2" cy="329.0" r="6.1"/><circle cx="292.8" cy="308.8" r="5.5"/><circle cx="303.1" cy="315.8" r="5.9"/><circle cx="409.6" cy="314.1" r="5.1"/><circle cx="325.4" cy="267.1" r="5.5"/><circle cx="388.1" cy="322.7" r="5.6"/><circle cx="303.6" cy="357.4" r="5.7"/><circle cx="384.0" cy="288.1" r="5.1"/><circle cx="407.4" cy="298.9" r="4.8"/><circle cx="276.7" cy="323.5" r="5.1"/><circle cx="384.0" cy="272.8" r="5.5"/><circle cx="320.0" cy="289.1" r="5.2"/><circle cx="386.9" cy="333.4" r="5.2"/><circle cx="397.7" cy="327.7" r="5.2"/><circle cx="306.1" cy="284.6" r="5.3"/><circle cx="373.2" cy="322.3" r="5.9"/><circle cx="330.0" cy="287.7" r="5.0"/><circle cx="346.3" cy="287.7" r="5.3"/><circle cx="304.5" cy="344.5" r="5.4"/><circle cx="335.0" cy="273.2" r="5.3"/><circle cx="347.5" cy="309.7" r="5.3"/><circle cx="379.2" cy="265.7" r="5.9"/><circle cx="284.5" cy="309.3" r="4.9"/><circle cx="288.9" cy="356.7" r="4.8"/><circle cx="318.3" cy="280.1" r="5.2"/><circle cx="339.0" cy="307.5" r="5.9"/><circle cx="328.2" cy="313.8" r="5.8"/><circle cx="332.5" cy="308.6" r="5.9"/><circle cx="289.3" cy="329.0" r="5.3"/><circle cx="359.3" cy="314.1" r="6.1"/><circle cx="387.2" cy="282.1" r="4.9"/><circle cx="411.7" cy="321.5" r="5.2"/><circle cx="361.7" cy="272.8" r="5.2"/><circle cx="285.2" cy="320.3" r="5.3"/><circle cx="325.7" cy="280.0" r="4.9"/><circle cx="394.2" cy="306.0" r="5.8"/><circle cx="329.8" cy="321.3" r="6.1"/><circle cx="415.1" cy="312.8" r="6.1"/><circle cx="296.1" cy="327.2" r="5.1"/><circle cx="370.3" cy="307.4" r="5.8"/><circle cx="346.2" cy="323.1" r="5.5"/><circle cx="397.4" cy="323.2" r="5.0"/><circle cx="301.7" cy="294.3" r="4.8"/><circle cx="298.9" cy="347.6" r="6.1"/><circle cx="366.2" cy="342.3" r="5.7"/><circle cx="293.8" cy="293.2" r="4.8"/><circle cx="296.5" cy="299.3" r="6.0"/><circle cx="380.8" cy="320.0" r="5.3"/><circle cx="399.3" cy="316.3" r="5.7"/><circle cx="390.0" cy="266.8" r="5.3"/><circle cx="404.5" cy="296.0" r="5.6"/><circle cx="313.6" cy="285.7" r="5.0"/><circle cx="401.6" cy="301.6" r="6.0"/><circle cx="311.4" cy="344.7" r="5.6"/><circle cx="334.4" cy="277.5" r="5.3"/><circle cx="307.0" cy="309.0" r="5.4"/><circle cx="317.7" cy="273.9" r="5.1"/><circle cx="347.7" cy="281.1" r="5.6"/><circle cx="393.4" cy="274.8" r="4.8"/><circle cx="356.2" cy="295.9" r="5.3"/><circle cx="337.2" cy="313.9" r="5.7"/><circle cx="353.0" cy="286.8" r="5.5"/><circle cx="350.1" cy="336.0" r="4.9"/><circle cx="398.3" cy="295.0" r="5.3"/><circle cx="370.7" cy="266.5" r="6.1"/><circle cx="376.4" cy="288.8" r="5.5"/><circle cx="327.1" cy="344.4" r="5.1"/><circle cx="394.2" cy="333.3" r="4.8"/><circle cx="330.6" cy="348.2" r="6.1"/><circle cx="401.8" cy="320.0" r="5.2"/><circle cx="278.0" cy="330.4" r="5.1"/><circle cx="396.7" cy="278.7" r="5.8"/><circle cx="337.1" cy="344.3" r="5.2"/><circle cx="345.1" cy="314.5" r="4.9"/><circle cx="316.0" cy="348.4" r="5.7"/><circle cx="294.0" cy="316.7" r="5.6"/><circle cx="325.6" cy="299.9" r="6.2"/><circle cx="372.4" cy="280.5" r="5.1"/><circle cx="354.4" cy="279.7" r="5.7"/><circle cx="267.1" cy="321.1" r="5.0"/><circle cx="309.0" cy="349.3" r="5.8"/><circle cx="380.8" cy="278.5" r="5.8"/><circle cx="391.6" cy="314.0" r="5.3"/><circle cx="354.8" cy="336.7" r="5.1"/><circle cx="334.7" cy="285.8" r="5.7"/><circle cx="389.9" cy="298.8" r="5.4"/><circle cx="364.3" cy="266.5" r="5.1"/></g><g fill="url(#spurpleT2)"><circle cx="371.5" cy="335.9" r="5.0"/><circle cx="402.1" cy="344.6" r="6.1"/><circle cx="355.9" cy="307.0" r="5.0"/><circle cx="278.6" cy="312.5" r="5.6"/><circle cx="332.3" cy="293.8" r="5.6"/><circle cx="282.5" cy="334.7" r="6.0"/><circle cx="272.7" cy="314.5" r="6.0"/><circle cx="291.1" cy="335.3" r="5.6"/><circle cx="380.8" cy="334.8" r="5.5"/><circle cx="297.7" cy="340.4" r="5.8"/><circle cx="359.2" cy="340.6" r="6.2"/><circle cx="368.5" cy="312.9" r="5.8"/><circle cx="361.2" cy="300.6" r="5.1"/><circle cx="339.3" cy="323.7" r="5.7"/><circle cx="361.9" cy="333.4" r="5.7"/><circle cx="399.0" cy="270.7" r="5.8"/><circle cx="381.8" cy="328.1" r="5.0"/><circle cx="340.7" cy="278.0" r="6.2"/><circle cx="387.5" cy="295.5" r="5.1"/><circle cx="314.2" cy="319.6" r="5.8"/><circle cx="379.7" cy="306.7" r="6.2"/><circle cx="376.9" cy="272.9" r="5.5"/><circle cx="414.4" cy="326.7" r="6.0"/><circle cx="377.0" cy="327.8" r="5.1"/><circle cx="363.5" cy="305.7" r="5.1"/><circle cx="337.8" cy="294.4" r="5.4"/><circle cx="359.4" cy="287.0" r="5.0"/><circle cx="412.5" cy="305.6" r="5.4"/><circle cx="330.3" cy="327.1" r="6.1"/><circle cx="390.0" cy="328.2" r="6.1"/><circle cx="321.6" cy="328.0" r="6.1"/><circle cx="405.8" cy="334.9" r="5.7"/><circle cx="354.1" cy="319.7" r="5.2"/><circle cx="318.3" cy="343.7" r="6.0"/><circle cx="366.4" cy="322.0" r="6.3"/><circle cx="350.2" cy="327.9" r="5.8"/><circle cx="369.8" cy="292.8" r="6.0"/><circle cx="350.4" cy="316.2" r="5.8"/><circle cx="349.0" cy="265.2" r="5.2"/><circle cx="277.7" cy="364.7" r="5.6"/><circle cx="343.9" cy="301.8" r="6.2"/><circle cx="290.7" cy="348.2" r="6.2"/><circle cx="401.9" cy="308.6" r="5.6"/><circle cx="355.9" cy="265.1" r="6.1"/><circle cx="308.5" cy="337.8" r="5.2"/><circle cx="406.7" cy="341.3" r="5.8"/><circle cx="386.3" cy="314.2" r="5.5"/><circle cx="345.6" cy="295.7" r="5.5"/><circle cx="301.4" cy="334.4" r="6.2"/><circle cx="374.4" cy="298.5" r="5.2"/><circle cx="342.8" cy="271.9" r="5.0"/><circle cx="369.9" cy="274.1" r="5.9"/><circle cx="330.6" cy="337.5" r="5.6"/><circle cx="362.6" cy="279.6" r="5.4"/></g><g fill="url(#spurpleT3)"><circle cx="321.7" cy="321.4" r="5.5"/><circle cx="281.9" cy="343.6" r="5.7"/><circle cx="365.0" cy="293.2" r="6.4"/><circle cx="367.8" cy="328.0" r="6.1"/><circle cx="361.1" cy="329.9" r="5.7"/><circle cx="336.7" cy="298.7" r="5.4"/><circle cx="323.1" cy="335.3" r="6.1"/><circle cx="409.7" cy="333.6" r="5.9"/><circle cx="288.2" cy="342.9" r="6.2"/><circle cx="282.6" cy="350.6" r="5.2"/><circle cx="406.3" cy="329.0" r="5.6"/><circle cx="381.4" cy="294.8" r="5.4"/><circle cx="320.2" cy="316.8" r="5.4"/><circle cx="385.1" cy="301.1" r="6.5"/><circle cx="318.4" cy="334.1" r="5.3"/><circle cx="386.6" cy="305.4" r="5.8"/></g><polygon points="229,317 245,312 259,315 264,326 282,338 280,359 273,370 268,384 266,401 264,430 250,436 253,459 266,475 279,488 289,510 289,536 282,546 273,555 273,578 266,584 244,594 240,613 234,626 221,639 215,652 205,655 192,639 192,626 208,610 211.5,600 224,584 231,568 234,552 240,533 247,520 253,504 257,484 253,462 253,446 247,436 224,423 217,417 206,401 203,384 206,366 213,338" fill="#422b42"/><g fill="url(#spinkL0)"><circle cx="240.4" cy="603.9" r="5.8"/><circle cx="212.1" cy="652.5" r="5.3"/><circle cx="240.5" cy="381.8" r="5.2"/><circle cx="221.9" cy="390.8" r="5.0"/><circle cx="240.5" cy="424.5" r="6.0"/><circle cx="239.0" cy="407.6" r="5.3"/><circle cx="224.9" cy="410.3" r="4.7"/><circle cx="243.2" cy="403.1" r="5.7"/><circle cx="242.1" cy="541.4" r="4.9"/><circle cx="233.8" cy="415.4" r="5.7"/><circle cx="204.7" cy="640.4" r="5.2"/><circle cx="250.7" cy="528.7" r="4.6"/><circle cx="274.9" cy="511.9" r="5.0"/><circle cx="271.5" cy="369.0" r="5.3"/><circle cx="235.6" cy="402.9" r="5.1"/><circle cx="223.1" cy="606.3" r="5.8"/><circle cx="241.7" cy="583.5" r="4.8"/><circle cx="240.4" cy="393.8" r="4.8"/><circle cx="200.9" cy="619.6" r="5.1"/><circle cx="259.2" cy="472.9" r="4.7"/></g><g fill="url(#spinkL1)"><circle cx="221.1" cy="599.7" r="5.5"/><circle cx="252.0" cy="361.6" r="5.7"/><circle cx="225.4" cy="591.4" r="5.6"/><circle cx="225.3" cy="396.1" r="5.5"/><circle cx="284.9" cy="501.1" r="6.1"/><circle cx="264.5" cy="577.2" r="5.3"/><circle cx="270.4" cy="360.5" r="5.0"/><circle cx="234.0" cy="348.5" r="6.1"/><circle cx="258.2" cy="519.1" r="5.4"/><circle cx="212.7" cy="637.7" r="6.1"/><circle cx="213.8" cy="397.7" r="5.1"/><circle cx="236.2" cy="333.0" r="5.5"/><circle cx="266.1" cy="501.0" r="5.5"/><circle cx="262.0" cy="507.4" r="5.6"/><circle cx="258.4" cy="340.4" r="4.9"/><circle cx="230.8" cy="327.7" r="6.0"/><circle cx="246.3" cy="312.3" r="5.4"/><circle cx="234.4" cy="317.9" r="5.6"/><circle cx="251.4" cy="388.5" r="5.2"/><circle cx="232.6" cy="577.2" r="6.0"/><circle cx="192.5" cy="632.2" r="5.0"/><circle cx="236.8" cy="584.6" r="5.5"/><circle cx="237.6" cy="575.1" r="5.3"/><circle cx="256.4" cy="353.9" r="5.6"/><circle cx="212.8" cy="609.2" r="5.4"/><circle cx="255.0" cy="533.9" r="5.6"/><circle cx="261.2" cy="499.2" r="5.4"/><circle cx="237.7" cy="599.0" r="4.8"/><circle cx="262.7" cy="491.0" r="5.6"/><circle cx="252.5" cy="515.1" r="5.2"/><circle cx="243.9" cy="415.4" r="5.5"/><circle cx="284.3" cy="513.0" r="4.9"/><circle cx="210.9" cy="388.4" r="5.0"/><circle cx="269.3" cy="373.4" r="5.9"/><circle cx="279.7" cy="508.4" r="5.9"/><circle cx="235.2" cy="570.6" r="5.6"/><circle cx="266.2" cy="354.9" r="6.1"/><circle cx="204.3" cy="388.7" r="4.8"/><circle cx="218.1" cy="592.3" r="5.8"/><circle cx="278.4" cy="543.2" r="6.1"/><circle cx="265.8" cy="541.9" r="6.0"/><circle cx="226.4" cy="417.1" r="5.7"/><circle cx="229.6" cy="319.5" r="5.5"/><circle cx="255.3" cy="464.0" r="4.9"/><circle cx="209.4" cy="632.4" r="5.4"/><circle cx="256.6" cy="493.6" r="5.1"/><circle cx="239.3" cy="328.1" r="5.1"/><circle cx="266.5" cy="334.3" r="5.1"/><circle cx="258.1" cy="347.0" r="5.5"/><circle cx="214.0" cy="408.6" r="5.5"/><circle cx="283.0" cy="527.5" r="5.7"/><circle cx="244.7" cy="319.6" r="5.0"/><circle cx="258.4" cy="428.1" r="5.7"/><circle cx="255.8" cy="422.3" r="5.8"/><circle cx="199.7" cy="633.8" r="6.1"/><circle cx="245.7" cy="395.6" r="5.3"/><circle cx="264.4" cy="478.6" r="5.0"/><circle cx="246.7" cy="380.7" r="6.0"/><circle cx="211.5" cy="400.5" r="5.3"/><circle cx="261.8" cy="533.5" r="5.0"/><circle cx="229.0" cy="404.1" r="6.1"/><circle cx="217.6" cy="381.8" r="6.1"/><circle cx="260.4" cy="361.9" r="5.2"/><circle cx="238.1" cy="389.4" r="5.9"/><circle cx="239.9" cy="535.1" r="5.3"/><circle cx="222.2" cy="617.6" r="5.3"/><circle cx="215.7" cy="603.9" r="6.0"/><circle cx="248.7" cy="325.0" r="4.8"/><circle cx="208.0" cy="645.9" r="5.0"/><circle cx="278.0" cy="519.9" r="5.2"/><circle cx="225.6" cy="382.9" r="5.5"/><circle cx="219.8" cy="611.5" r="5.3"/><circle cx="264.9" cy="366.8" r="5.3"/><circle cx="222.6" cy="341.0" r="6.1"/><circle cx="225.7" cy="390.4" r="5.2"/><circle cx="204.6" cy="625.2" r="5.8"/><circle cx="233.0" cy="421.8" r="6.2"/><circle cx="249.1" cy="532.7" r="5.1"/><circle cx="216.5" cy="338.9" r="5.7"/><circle cx="225.7" cy="332.2" r="6.0"/><circle cx="218.1" cy="374.6" r="5.2"/><circle cx="247.5" cy="422.9" r="4.8"/><circle cx="261.7" cy="340.3" r="5.6"/><circle cx="208.7" cy="381.9" r="5.3"/><circle cx="251.0" cy="415.9" r="4.9"/><circle cx="272.0" cy="506.9" r="6.0"/><circle cx="234.1" cy="590.7" r="5.4"/><circle cx="221.0" cy="402.1" r="6.0"/><circle cx="250.1" cy="518.7" r="5.7"/><circle cx="262.3" cy="543.9" r="5.1"/><circle cx="229.1" cy="598.9" r="5.7"/><circle cx="255.1" cy="380.7" r="5.4"/><circle cx="249.2" cy="407.8" r="5.8"/></g><g fill="url(#spinkL2)"><circle cx="269.9" cy="556.9" r="5.4"/><circle cx="239.0" cy="369.8" r="6.1"/><circle cx="265.4" cy="521.1" r="5.0"/><circle cx="265.4" cy="409.5" r="5.5"/><circle cx="250.1" cy="367.5" r="5.6"/><circle cx="269.8" cy="563.5" r="5.6"/><circle cx="251.8" cy="567.3" r="6.1"/><circle cx="218.0" cy="633.8" r="6.2"/><circle cx="228.1" cy="612.9" r="5.2"/><circle cx="218.2" cy="619.6" r="5.6"/><circle cx="246.9" cy="355.5" r="5.5"/><circle cx="236.6" cy="372.8" r="5.1"/><circle cx="219.3" cy="345.2" r="5.2"/><circle cx="255.5" cy="365.9" r="6.2"/><circle cx="276.6" cy="526.0" r="5.1"/><circle cx="239.7" cy="354.6" r="6.1"/><circle cx="268.6" cy="515.0" r="5.9"/><circle cx="234.6" cy="360.7" r="5.3"/><circle cx="250.4" cy="346.1" r="6.2"/><circle cx="230.2" cy="367.7" r="5.7"/><circle cx="194.9" cy="639.4" r="5.8"/><circle cx="212.9" cy="374.3" r="5.7"/><circle cx="261.9" cy="526.0" r="5.7"/><circle cx="268.6" cy="484.1" r="5.2"/><circle cx="210.5" cy="624.6" r="5.3"/><circle cx="277.5" cy="500.4" r="5.9"/><circle cx="256.5" cy="324.7" r="6.0"/><circle cx="234.3" cy="610.2" r="5.5"/><circle cx="260.3" cy="556.6" r="5.0"/><circle cx="215.7" cy="367.9" r="6.1"/><circle cx="269.4" cy="347.3" r="6.3"/><circle cx="244.9" cy="333.2" r="5.3"/><circle cx="265.9" cy="394.8" r="5.3"/><circle cx="206.8" cy="620.5" r="5.6"/><circle cx="232.6" cy="340.1" r="5.3"/><circle cx="269.7" cy="351.6" r="5.3"/><circle cx="216.5" cy="352.7" r="5.6"/><circle cx="257.8" cy="418.6" r="5.7"/><circle cx="220.7" cy="334.6" r="5.2"/><circle cx="246.0" cy="346.6" r="5.6"/><circle cx="277.7" cy="352.2" r="6.1"/><circle cx="257.9" cy="396.0" r="5.3"/><circle cx="237.8" cy="557.8" r="6.0"/><circle cx="244.4" cy="358.8" r="5.2"/><circle cx="220.2" cy="417.5" r="5.6"/><circle cx="226.2" cy="583.5" r="6.0"/><circle cx="249.7" cy="375.8" r="5.0"/><circle cx="261.6" cy="485.8" r="5.3"/><circle cx="250.2" cy="582.7" r="5.2"/><circle cx="261.9" cy="515.2" r="5.1"/><circle cx="229.7" cy="605.4" r="5.4"/><circle cx="241.7" cy="376.6" r="5.4"/><circle cx="247.3" cy="547.8" r="5.5"/><circle cx="274.0" cy="361.4" r="5.0"/><circle cx="230.8" cy="395.4" r="5.4"/><circle cx="270.1" cy="548.3" r="5.1"/><circle cx="254.0" cy="407.7" r="5.3"/><circle cx="255.3" cy="577.9" r="6.0"/><circle cx="232.2" cy="353.0" r="5.9"/><circle cx="245.1" cy="555.9" r="5.4"/><circle cx="255.9" cy="505.0" r="6.3"/><circle cx="250.2" cy="332.6" r="6.3"/><circle cx="260.8" cy="386.8" r="5.0"/><circle cx="239.4" cy="339.5" r="5.9"/><circle cx="249.2" cy="589.1" r="6.2"/><circle cx="234.4" cy="564.5" r="6.3"/><circle cx="250.0" cy="576.3" r="5.2"/><circle cx="266.2" cy="563.2" r="5.2"/><circle cx="225.4" cy="355.2" r="6.3"/><circle cx="260.6" cy="400.8" r="5.3"/><circle cx="229.0" cy="345.2" r="6.3"/><circle cx="261.9" cy="547.5" r="5.3"/><circle cx="261.3" cy="372.6" r="6.0"/><circle cx="266.1" cy="567.5" r="6.2"/><circle cx="241.1" cy="563.7" r="5.5"/><circle cx="259.0" cy="333.2" r="5.6"/><circle cx="258.8" cy="316.8" r="5.5"/><circle cx="278.5" cy="533.8" r="6.1"/><circle cx="258.9" cy="568.1" r="5.3"/><circle cx="208.2" cy="396.0" r="5.9"/><circle cx="270.6" cy="521.2" r="5.1"/><circle cx="250.0" cy="402.1" r="6.1"/><circle cx="241.8" cy="591.4" r="6.2"/><circle cx="242.1" cy="568.6" r="5.8"/><circle cx="222.9" cy="326.4" r="6.0"/><circle cx="262.3" cy="327.1" r="5.4"/><circle cx="254.8" cy="560.6" r="5.4"/><circle cx="200.9" cy="644.8" r="5.3"/><circle cx="222.0" cy="361.6" r="5.5"/></g><g fill="url(#spinkL3)"><circle cx="258.0" cy="581.6" r="6.5"/><circle cx="264.6" cy="382.8" r="6.2"/><circle cx="230.2" cy="374.5" r="5.3"/><circle cx="227.9" cy="358.8" r="5.8"/><circle cx="253.5" cy="557.0" r="5.2"/><circle cx="286.4" cy="518.8" r="6.4"/><circle cx="231.8" cy="618.1" r="5.8"/><circle cx="270.0" cy="494.8" r="5.3"/><circle cx="265.9" cy="529.1" r="5.3"/><circle cx="246.5" cy="342.0" r="5.8"/><circle cx="253.6" cy="550.9" r="5.8"/><circle cx="276.5" cy="345.7" r="6.3"/><circle cx="273.6" cy="535.6" r="5.3"/><circle cx="230.8" cy="379.7" r="5.4"/><circle cx="206.3" cy="368.5" r="6.0"/><circle cx="251.7" cy="320.6" r="5.9"/><circle cx="247.9" cy="560.7" r="5.6"/><circle cx="214.2" cy="361.4" r="5.9"/><circle cx="227.8" cy="624.3" r="6.0"/><circle cx="221.7" cy="625.4" r="5.1"/><circle cx="273.4" cy="339.5" r="5.9"/><circle cx="254.4" cy="542.7" r="5.6"/><circle cx="280.6" cy="340.1" r="5.9"/><circle cx="224.9" cy="631.5" r="5.7"/><circle cx="221.8" cy="637.0" r="5.4"/><circle cx="241.6" cy="548.1" r="5.3"/><circle cx="225.4" cy="366.5" r="5.2"/></g><polygon points="267,369 301,360 346,347 390,338 411,350 420,345 442,345 430,380 430,420 425,460 410,475 380,480 330,475 290,455 270,430 266,401 268,384" fill="#37483f"/><g fill="url(#smintC0)"><circle cx="344.1" cy="366.4" r="4.8"/><circle cx="283.9" cy="434.8" r="5.2"/><circle cx="270.1" cy="401.5" r="5.3"/><circle cx="402.3" cy="409.6" r="5.6"/><circle cx="421.7" cy="456.8" r="4.8"/><circle cx="409.7" cy="395.1" r="5.9"/><circle cx="307.0" cy="391.6" r="5.0"/><circle cx="344.3" cy="386.7" r="5.8"/><circle cx="359.8" cy="429.5" r="4.8"/><circle cx="356.4" cy="372.4" r="5.0"/><circle cx="416.1" cy="433.5" r="4.7"/><circle cx="328.4" cy="472.2" r="5.1"/><circle cx="294.0" cy="374.1" r="5.2"/><circle cx="299.2" cy="447.9" r="4.7"/><circle cx="298.9" cy="379.1" r="4.7"/><circle cx="273.9" cy="409.9" r="5.1"/><circle cx="366.2" cy="468.6" r="4.7"/><circle cx="361.1" cy="364.8" r="5.4"/><circle cx="298.3" cy="409.6" r="5.5"/><circle cx="337.7" cy="365.8" r="5.0"/><circle cx="301.0" cy="442.7" r="5.4"/><circle cx="409.3" cy="433.1" r="5.0"/><circle cx="300.4" cy="374.2" r="5.2"/><circle cx="327.7" cy="407.2" r="4.9"/><circle cx="396.4" cy="436.6" r="5.4"/><circle cx="391.2" cy="385.1" r="5.8"/><circle cx="415.4" cy="426.6" r="5.3"/><circle cx="307.4" cy="378.8" r="5.8"/><circle cx="365.9" cy="373.7" r="4.8"/><circle cx="375.1" cy="386.2" r="4.8"/><circle cx="284.5" cy="429.0" r="4.9"/><circle cx="412.2" cy="399.5" r="4.8"/><circle cx="317.7" cy="442.5" r="5.0"/><circle cx="416.6" cy="423.5" r="5.9"/><circle cx="363.3" cy="463.3" r="5.4"/><circle cx="310.7" cy="385.6" r="5.4"/></g><g fill="url(#smintC1)"><circle cx="272.9" cy="391.8" r="6.0"/><circle cx="311.9" cy="430.7" r="5.0"/><circle cx="404.4" cy="467.9" r="4.8"/><circle cx="422.3" cy="357.9" r="5.5"/><circle cx="348.9" cy="388.7" r="5.3"/><circle cx="293.9" cy="413.4" r="5.6"/><circle cx="356.6" cy="469.3" r="5.8"/><circle cx="276.0" cy="414.6" r="5.4"/><circle cx="414.0" cy="356.7" r="6.1"/><circle cx="328.9" cy="463.3" r="5.1"/><circle cx="351.7" cy="400.8" r="5.1"/><circle cx="385.0" cy="395.3" r="5.3"/><circle cx="304.3" cy="360.0" r="4.9"/><circle cx="303.9" cy="399.9" r="5.9"/><circle cx="319.3" cy="402.4" r="4.8"/><circle cx="420.1" cy="372.5" r="5.1"/><circle cx="423.4" cy="430.4" r="4.8"/><circle cx="379.3" cy="461.5" r="5.7"/><circle cx="371.9" cy="437.0" r="6.2"/><circle cx="404.4" cy="350.7" r="5.7"/><circle cx="369.5" cy="391.8" r="5.5"/><circle cx="284.0" cy="444.3" r="5.1"/><circle cx="368.1" cy="399.5" r="5.8"/><circle cx="382.3" cy="375.0" r="5.6"/><circle cx="322.5" cy="451.2" r="6.0"/><circle cx="368.2" cy="415.5" r="6.0"/><circle cx="312.6" cy="366.7" r="5.1"/><circle cx="420.0" cy="393.0" r="5.4"/><circle cx="386.7" cy="380.5" r="5.9"/><circle cx="352.8" cy="464.9" r="5.6"/><circle cx="358.5" cy="458.2" r="5.5"/><circle cx="398.0" cy="428.9" r="5.3"/><circle cx="382.6" cy="385.9" r="4.8"/><circle cx="378.8" cy="364.3" r="4.9"/><circle cx="356.3" cy="399.4" r="5.4"/><circle cx="330.4" cy="392.2" r="5.5"/><circle cx="414.1" cy="413.3" r="4.8"/><circle cx="398.9" cy="345.9" r="5.0"/><circle cx="318.1" cy="456.1" r="5.3"/><circle cx="383.0" cy="345.3" r="5.0"/><circle cx="422.4" cy="442.2" r="5.2"/><circle cx="368.2" cy="364.2" r="5.2"/><circle cx="367.7" cy="420.2" r="5.9"/><circle cx="359.3" cy="344.9" r="5.5"/><circle cx="356.2" cy="377.9" r="5.7"/><circle cx="355.5" cy="407.4" r="5.8"/><circle cx="407.3" cy="429.2" r="6.1"/><circle cx="428.4" cy="382.1" r="5.7"/><circle cx="362.0" cy="392.8" r="4.8"/><circle cx="406.2" cy="444.7" r="5.2"/><circle cx="374.1" cy="357.3" r="5.1"/><circle cx="305.4" cy="366.1" r="5.8"/><circle cx="324.5" cy="442.0" r="5.8"/><circle cx="433.7" cy="354.1" r="5.5"/><circle cx="278.9" cy="401.7" r="5.1"/><circle cx="411.3" cy="353.0" r="5.8"/><circle cx="402.1" cy="366.2" r="6.1"/><circle cx="271.0" cy="413.3" r="4.9"/><circle cx="410.2" cy="364.1" r="4.8"/><circle cx="328.1" cy="455.7" r="6.0"/><circle cx="411.3" cy="464.2" r="6.1"/><circle cx="317.3" cy="373.4" r="6.2"/><circle cx="426.2" cy="353.9" r="6.1"/><circle cx="400.5" cy="395.3" r="5.5"/><circle cx="347.5" cy="448.5" r="4.8"/><circle cx="313.9" cy="393.3" r="4.9"/><circle cx="282.4" cy="408.4" r="5.3"/><circle cx="280.5" cy="367.5" r="4.8"/><circle cx="312.0" cy="450.2" r="4.9"/><circle cx="328.2" cy="359.1" r="5.4"/><circle cx="297.0" cy="420.9" r="5.8"/><circle cx="267.7" cy="372.0" r="5.1"/><circle cx="427.9" cy="395.4" r="5.3"/><circle cx="391.9" cy="395.2" r="6.1"/><circle cx="333.9" cy="470.1" r="5.7"/><circle cx="345.0" cy="407.8" r="5.3"/><circle cx="415.9" cy="443.2" r="6.0"/><circle cx="280.4" cy="429.1" r="5.1"/><circle cx="381.9" cy="454.9" r="5.1"/><circle cx="341.0" cy="415.9" r="4.9"/><circle cx="365.5" cy="444.3" r="5.0"/><circle cx="404.3" cy="346.6" r="5.5"/><circle cx="411.6" cy="419.9" r="5.9"/><circle cx="307.2" cy="450.7" r="5.4"/><circle cx="307.8" cy="398.4" r="5.5"/><circle cx="387.9" cy="356.7" r="4.9"/><circle cx="400.6" cy="434.4" r="5.1"/><circle cx="316.3" cy="380.0" r="5.9"/><circle cx="417.2" cy="354.1" r="5.9"/><circle cx="309.1" cy="358.1" r="5.3"/><circle cx="335.9" cy="385.4" r="5.7"/><circle cx="312.4" cy="458.2" r="5.4"/><circle cx="281.1" cy="382.1" r="5.2"/><circle cx="391.4" cy="427.5" r="5.5"/><circle cx="396.4" cy="357.9" r="6.0"/><circle cx="324.4" cy="387.7" r="5.9"/><circle cx="336.2" cy="415.3" r="5.4"/><circle cx="351.9" cy="413.7" r="5.7"/><circle cx="395.0" cy="379.1" r="6.2"/><circle cx="288.2" cy="385.5" r="5.8"/><circle cx="422.8" cy="412.5" r="4.9"/><circle cx="353.9" cy="476.9" r="5.9"/><circle cx="300.5" cy="455.7" r="6.0"/><circle cx="417.7" cy="464.8" r="5.7"/><circle cx="352.3" cy="367.0" r="5.2"/><circle cx="328.9" cy="447.0" r="5.8"/><circle cx="411.6" cy="448.1" r="4.8"/><circle cx="404.5" cy="416.2" r="5.0"/><circle cx="312.3" cy="372.6" r="5.0"/><circle cx="306.0" cy="436.1" r="5.6"/><circle cx="292.3" cy="435.5" r="6.1"/><circle cx="344.1" cy="359.5" r="5.9"/><circle cx="288.1" cy="451.2" r="5.9"/><circle cx="342.7" cy="443.9" r="5.6"/><circle cx="290.0" cy="409.7" r="6.0"/><circle cx="359.7" cy="381.7" r="5.3"/><circle cx="315.3" cy="462.1" r="5.7"/><circle cx="351.0" cy="442.6" r="5.1"/><circle cx="383.1" cy="442.9" r="5.5"/><circle cx="327.8" cy="402.7" r="5.7"/><circle cx="323.3" cy="377.4" r="5.9"/><circle cx="287.7" cy="395.0" r="5.2"/><circle cx="334.0" cy="429.1" r="5.6"/><circle cx="376.4" cy="470.1" r="5.1"/><circle cx="336.5" cy="380.7" r="5.8"/><circle cx="328.4" cy="373.5" r="5.1"/><circle cx="291.2" cy="364.1" r="6.1"/><circle cx="336.5" cy="451.1" r="4.9"/><circle cx="329.9" cy="378.2" r="5.1"/><circle cx="292.5" cy="399.1" r="5.5"/><circle cx="359.4" cy="441.5" r="5.0"/><circle cx="378.6" cy="378.1" r="5.9"/><circle cx="317.4" cy="358.5" r="5.0"/><circle cx="288.4" cy="421.5" r="4.8"/><circle cx="388.0" cy="372.9" r="5.2"/><circle cx="324.2" cy="353.6" r="4.9"/><circle cx="398.7" cy="401.8" r="6.1"/><circle cx="324.0" cy="426.3" r="5.7"/><circle cx="281.7" cy="393.5" r="6.1"/><circle cx="323.3" cy="364.2" r="4.9"/><circle cx="295.8" cy="385.0" r="4.9"/><circle cx="380.9" cy="468.5" r="5.7"/><circle cx="423.6" cy="388.3" r="6.1"/><circle cx="371.4" cy="380.0" r="4.8"/><circle cx="397.8" cy="443.6" r="4.8"/><circle cx="405.3" cy="358.8" r="5.0"/><circle cx="388.7" cy="456.0" r="5.1"/><circle cx="360.3" cy="435.2" r="5.9"/><circle cx="388.3" cy="448.1" r="5.2"/><circle cx="322.3" cy="406.4" r="5.3"/><circle cx="360.6" cy="420.5" r="6.1"/><circle cx="302.9" cy="386.0" r="5.0"/><circle cx="289.2" cy="378.8" r="5.2"/><circle cx="296.5" cy="367.4" r="5.9"/><circle cx="369.2" cy="464.1" r="5.9"/><circle cx="359.6" cy="388.0" r="5.7"/><circle cx="372.2" cy="476.1" r="6.1"/><circle cx="300.2" cy="412.9" r="5.8"/><circle cx="314.9" cy="434.7" r="5.3"/><circle cx="350.1" cy="373.5" r="5.1"/><circle cx="348.0" cy="433.4" r="6.0"/><circle cx="301.6" cy="426.2" r="5.7"/><circle cx="323.9" cy="462.1" r="5.4"/><circle cx="387.7" cy="366.0" r="5.3"/><circle cx="295.2" cy="429.0" r="5.5"/><circle cx="373.9" cy="372.9" r="5.7"/><circle cx="389.6" cy="346.8" r="5.8"/><circle cx="429.8" cy="386.6" r="5.1"/><circle cx="393.3" cy="448.3" r="5.3"/><circle cx="384.2" cy="351.0" r="5.4"/><circle cx="278.0" cy="370.6" r="5.1"/><circle cx="331.7" cy="402.7" r="6.1"/><circle cx="368.3" cy="386.2" r="5.7"/><circle cx="271.8" cy="380.1" r="5.2"/><circle cx="333.3" cy="358.8" r="5.8"/></g><g fill="url(#smintC2)"><circle cx="386.7" cy="465.2" r="5.0"/><circle cx="333.8" cy="442.9" r="6.3"/><circle cx="399.9" cy="377.6" r="6.3"/><circle cx="286.9" cy="372.1" r="5.7"/><circle cx="320.3" cy="434.3" r="5.8"/><circle cx="288.0" cy="402.9" r="6.1"/><circle cx="371.5" cy="405.4" r="4.9"/><circle cx="428.1" cy="434.3" r="5.0"/><circle cx="354.8" cy="351.6" r="5.3"/><circle cx="379.9" cy="398.7" r="5.3"/><circle cx="382.6" cy="359.9" r="5.6"/><circle cx="365.7" cy="455.5" r="5.8"/><circle cx="353.8" cy="422.5" r="5.7"/><circle cx="337.5" cy="435.6" r="5.0"/><circle cx="367.2" cy="343.3" r="6.1"/><circle cx="353.0" cy="449.2" r="5.7"/><circle cx="339.6" cy="465.1" r="5.4"/><circle cx="308.8" cy="440.1" r="6.0"/><circle cx="342.7" cy="371.6" r="5.2"/><circle cx="276.0" cy="420.0" r="6.1"/><circle cx="355.1" cy="393.6" r="5.4"/><circle cx="337.0" cy="395.1" r="5.4"/><circle cx="378.8" cy="420.6" r="5.9"/><circle cx="404.6" cy="389.0" r="5.0"/><circle cx="380.0" cy="395.5" r="5.6"/><circle cx="361.1" cy="353.2" r="6.2"/><circle cx="391.7" cy="422.9" r="5.2"/><circle cx="342.4" cy="458.5" r="5.4"/><circle cx="337.7" cy="405.5" r="5.7"/><circle cx="348.3" cy="458.2" r="5.8"/><circle cx="425.2" cy="409.0" r="5.5"/><circle cx="346.8" cy="350.7" r="5.2"/><circle cx="330.4" cy="364.3" r="6.3"/><circle cx="278.6" cy="384.7" r="6.1"/><circle cx="411.6" cy="387.0" r="5.7"/><circle cx="305.6" cy="422.0" r="5.9"/><circle cx="356.2" cy="415.1" r="5.1"/><circle cx="401.4" cy="423.8" r="6.1"/><circle cx="418.9" cy="367.4" r="5.0"/><circle cx="423.9" cy="367.4" r="5.3"/><circle cx="376.6" cy="353.1" r="5.7"/><circle cx="350.2" cy="359.0" r="5.4"/><circle cx="334.1" cy="458.3" r="4.9"/><circle cx="356.0" cy="358.6" r="5.9"/><circle cx="396.3" cy="476.7" r="6.0"/><circle cx="345.7" cy="421.2" r="6.2"/><circle cx="420.7" cy="402.1" r="5.6"/><circle cx="335.3" cy="374.5" r="5.7"/><circle cx="320.0" cy="423.1" r="5.0"/><circle cx="314.1" cy="409.9" r="5.9"/><circle cx="375.8" cy="435.3" r="5.0"/><circle cx="371.7" cy="346.7" r="5.4"/><circle cx="431.4" cy="370.9" r="5.4"/><circle cx="376.7" cy="448.0" r="6.3"/><circle cx="374.0" cy="454.4" r="5.0"/><circle cx="377.1" cy="479.6" r="5.9"/><circle cx="271.6" cy="428.0" r="5.9"/><circle cx="384.1" cy="476.7" r="5.2"/><circle cx="392.3" cy="407.5" r="5.0"/><circle cx="360.0" cy="447.0" r="5.5"/><circle cx="390.2" cy="469.4" r="5.3"/><circle cx="417.3" cy="379.0" r="6.2"/><circle cx="348.1" cy="429.2" r="6.2"/><circle cx="320.2" cy="385.2" r="5.0"/><circle cx="337.9" cy="423.4" r="6.0"/><circle cx="411.1" cy="409.5" r="5.8"/><circle cx="312.3" cy="413.2" r="6.3"/><circle cx="384.6" cy="437.8" r="5.4"/><circle cx="297.9" cy="393.5" r="5.7"/><circle cx="342.9" cy="400.0" r="5.7"/><circle cx="368.4" cy="350.5" r="5.4"/><circle cx="303.7" cy="406.3" r="5.4"/><circle cx="399.1" cy="454.4" r="5.5"/><circle cx="340.1" cy="427.1" r="5.3"/><circle cx="319.9" cy="391.5" r="6.3"/><circle cx="343.7" cy="377.5" r="5.9"/><circle cx="388.7" cy="402.1" r="5.7"/><circle cx="401.8" cy="447.4" r="5.1"/><circle cx="279.9" cy="421.5" r="5.3"/><circle cx="399.8" cy="465.2" r="5.4"/><circle cx="376.1" cy="399.4" r="5.5"/><circle cx="316.1" cy="421.8" r="5.7"/><circle cx="430.0" cy="359.5" r="6.2"/><circle cx="397.7" cy="413.5" r="5.1"/><circle cx="411.6" cy="454.8" r="5.6"/><circle cx="374.2" cy="443.2" r="5.9"/><circle cx="412.8" cy="374.9" r="5.6"/><circle cx="404.6" cy="457.6" r="5.4"/><circle cx="318.4" cy="416.0" r="5.9"/><circle cx="366.4" cy="428.6" r="5.0"/><circle cx="388.9" cy="440.0" r="6.3"/><circle cx="425.2" cy="450.5" r="6.0"/><circle cx="348.9" cy="469.1" r="5.1"/><circle cx="409.7" cy="378.4" r="5.2"/></g><g fill="url(#smintC3)"><circle cx="344.2" cy="463.5" r="5.6"/><circle cx="331.2" cy="421.5" r="5.7"/><circle cx="392.0" cy="461.1" r="5.6"/><circle cx="418.5" cy="407.5" r="5.9"/><circle cx="345.0" cy="475.0" r="6.5"/><circle cx="381.9" cy="429.8" r="6.2"/><circle cx="399.3" cy="468.7" r="6.3"/><circle cx="330.2" cy="436.9" r="6.2"/><circle cx="404.7" cy="375.2" r="6.1"/><circle cx="378.8" cy="409.5" r="6.0"/><circle cx="386.2" cy="408.7" r="6.2"/><circle cx="343.8" cy="392.4" r="5.8"/><circle cx="387.2" cy="422.2" r="5.9"/><circle cx="374.7" cy="416.1" r="5.3"/><circle cx="324.8" cy="416.9" r="5.1"/><circle cx="271.4" cy="385.4" r="6.2"/><circle cx="371.1" cy="451.3" r="6.1"/><circle cx="340.3" cy="471.0" r="5.7"/><circle cx="396.0" cy="373.7" r="5.5"/><circle cx="381.1" cy="413.0" r="6.4"/><circle cx="374.6" cy="426.4" r="5.2"/><circle cx="319.7" cy="428.1" r="6.4"/><circle cx="394.6" cy="364.5" r="5.1"/><circle cx="362.9" cy="406.0" r="6.5"/><circle cx="390.4" cy="415.4" r="5.8"/><circle cx="287.2" cy="414.3" r="5.6"/></g><polygon points="412,346 457,342 468,334 491,332 502,345 510,365 525,379 542,382 545,390 536,395 525,396 522,413 519,424 508,436 496,447 476,453 457,458 437,458 423,452 414,440 416,415 414,390 415,365" fill="#284328"/><g fill="url(#sgreenR0)"><circle cx="519.5" cy="380.3" r="5.6"/><circle cx="458.0" cy="383.0" r="4.9"/><circle cx="450.7" cy="388.8" r="4.8"/><circle cx="421.2" cy="444.8" r="5.3"/><circle cx="462.1" cy="386.6" r="5.6"/><circle cx="473.3" cy="366.4" r="5.3"/><circle cx="479.5" cy="354.3" r="5.1"/><circle cx="477.2" cy="359.6" r="5.7"/><circle cx="491.8" cy="359.1" r="5.4"/><circle cx="522.9" cy="401.9" r="6.0"/><circle cx="448.1" cy="368.6" r="5.9"/><circle cx="528.0" cy="382.1" r="5.8"/><circle cx="501.6" cy="400.2" r="5.4"/><circle cx="519.8" cy="393.2" r="5.6"/><circle cx="423.5" cy="396.9" r="5.9"/><circle cx="482.0" cy="359.1" r="4.8"/><circle cx="418.2" cy="435.6" r="5.9"/><circle cx="491.3" cy="385.7" r="5.1"/><circle cx="439.3" cy="381.4" r="5.2"/><circle cx="464.2" cy="395.8" r="5.8"/><circle cx="494.2" cy="351.5" r="4.6"/><circle cx="514.9" cy="417.2" r="5.8"/><circle cx="443.0" cy="389.7" r="5.3"/><circle cx="455.5" cy="365.6" r="5.2"/><circle cx="477.1" cy="389.5" r="4.8"/><circle cx="436.7" cy="361.1" r="5.4"/><circle cx="489.3" cy="365.7" r="5.4"/><circle cx="473.1" cy="407.8" r="5.1"/><circle cx="467.6" cy="389.1" r="5.4"/><circle cx="446.8" cy="379.0" r="5.5"/><circle cx="414.9" cy="394.6" r="5.5"/><circle cx="476.8" cy="346.1" r="5.5"/><circle cx="475.8" cy="441.1" r="5.4"/><circle cx="496.4" cy="368.6" r="5.2"/><circle cx="521.9" cy="385.6" r="4.7"/><circle cx="425.3" cy="422.8" r="5.9"/><circle cx="423.0" cy="350.5" r="6.0"/><circle cx="449.4" cy="394.6" r="6.0"/><circle cx="514.8" cy="400.9" r="5.5"/></g><g fill="url(#sgreenR1)"><circle cx="462.8" cy="437.9" r="5.4"/><circle cx="459.4" cy="376.0" r="5.3"/><circle cx="469.0" cy="402.1" r="5.0"/><circle cx="472.0" cy="350.9" r="5.1"/><circle cx="474.2" cy="430.0" r="5.4"/><circle cx="431.6" cy="351.5" r="5.6"/><circle cx="463.4" cy="407.3" r="5.0"/><circle cx="462.3" cy="455.7" r="5.9"/><circle cx="488.0" cy="422.6" r="5.5"/><circle cx="499.7" cy="347.9" r="4.9"/><circle cx="439.6" cy="396.6" r="5.5"/><circle cx="501.8" cy="437.7" r="5.9"/><circle cx="450.8" cy="371.9" r="5.5"/><circle cx="466.8" cy="455.1" r="5.5"/><circle cx="482.3" cy="442.5" r="5.0"/><circle cx="423.4" cy="449.5" r="5.2"/><circle cx="481.4" cy="393.1" r="5.3"/><circle cx="504.5" cy="393.0" r="5.1"/><circle cx="482.0" cy="434.3" r="5.8"/><circle cx="433.5" cy="382.7" r="5.4"/><circle cx="433.6" cy="435.5" r="6.1"/><circle cx="486.2" cy="337.2" r="5.7"/><circle cx="448.9" cy="351.1" r="6.0"/><circle cx="418.2" cy="345.9" r="5.7"/><circle cx="532.5" cy="388.1" r="5.4"/><circle cx="430.5" cy="420.5" r="5.9"/><circle cx="479.2" cy="367.4" r="5.6"/><circle cx="467.5" cy="430.7" r="5.5"/><circle cx="505.6" cy="378.9" r="5.1"/><circle cx="497.0" cy="396.4" r="5.6"/><circle cx="529.7" cy="394.1" r="5.5"/><circle cx="444.1" cy="375.0" r="5.1"/><circle cx="452.4" cy="415.6" r="5.3"/><circle cx="421.6" cy="431.2" r="5.2"/><circle cx="490.2" cy="393.7" r="5.2"/><circle cx="501.9" cy="354.8" r="5.9"/><circle cx="466.3" cy="415.3" r="5.2"/><circle cx="429.7" cy="396.1" r="5.2"/><circle cx="467.3" cy="344.0" r="4.9"/><circle cx="466.7" cy="372.7" r="5.5"/><circle cx="414.3" cy="351.4" r="5.3"/><circle cx="460.7" cy="445.0" r="5.6"/><circle cx="473.3" cy="395.2" r="6.0"/><circle cx="435.4" cy="385.3" r="5.6"/><circle cx="467.9" cy="357.5" r="6.1"/><circle cx="471.7" cy="337.9" r="5.1"/><circle cx="462.0" cy="378.8" r="5.3"/><circle cx="509.6" cy="417.3" r="5.9"/><circle cx="493.4" cy="348.0" r="4.9"/><circle cx="504.0" cy="368.2" r="4.9"/><circle cx="451.2" cy="457.9" r="5.7"/><circle cx="498.9" cy="386.3" r="5.8"/><circle cx="473.8" cy="421.0" r="5.5"/><circle cx="414.1" cy="348.2" r="5.4"/><circle cx="534.0" cy="392.3" r="5.3"/><circle cx="466.4" cy="444.5" r="5.8"/><circle cx="441.7" cy="448.4" r="4.8"/><circle cx="457.2" cy="353.6" r="5.0"/><circle cx="439.0" cy="434.4" r="5.8"/><circle cx="457.8" cy="436.8" r="5.7"/><circle cx="517.0" cy="373.2" r="6.1"/><circle cx="424.1" cy="435.1" r="6.2"/><circle cx="473.0" cy="434.2" r="5.7"/><circle cx="511.2" cy="421.2" r="5.1"/><circle cx="459.5" cy="399.4" r="6.1"/><circle cx="476.0" cy="417.2" r="6.1"/><circle cx="499.7" cy="358.0" r="5.1"/><circle cx="496.1" cy="380.9" r="5.7"/><circle cx="487.7" cy="380.7" r="6.0"/><circle cx="481.7" cy="431.7" r="5.2"/><circle cx="437.7" cy="442.5" r="5.6"/><circle cx="456.6" cy="450.5" r="5.3"/><circle cx="420.5" cy="358.4" r="5.1"/><circle cx="476.6" cy="334.2" r="5.2"/><circle cx="461.9" cy="428.2" r="6.1"/><circle cx="478.3" cy="401.1" r="4.8"/><circle cx="512.1" cy="379.6" r="5.1"/><circle cx="442.1" cy="430.0" r="5.7"/><circle cx="483.9" cy="386.0" r="5.2"/><circle cx="442.1" cy="359.5" r="5.3"/><circle cx="502.6" cy="406.4" r="5.6"/><circle cx="482.0" cy="403.6" r="5.5"/><circle cx="435.7" cy="373.3" r="5.9"/><circle cx="521.9" cy="410.0" r="4.8"/><circle cx="479.8" cy="448.5" r="5.2"/></g><g fill="url(#sgreenR2)"><circle cx="430.9" cy="406.7" r="5.7"/><circle cx="481.0" cy="407.9" r="5.0"/><circle cx="460.1" cy="357.8" r="5.0"/><circle cx="513.8" cy="427.6" r="5.5"/><circle cx="493.1" cy="402.7" r="5.9"/><circle cx="418.8" cy="402.0" r="5.3"/><circle cx="484.6" cy="334.1" r="6.1"/><circle cx="433.4" cy="452.3" r="5.9"/><circle cx="463.1" cy="364.9" r="6.3"/><circle cx="454.2" cy="344.0" r="5.1"/><circle cx="442.2" cy="344.3" r="5.3"/><circle cx="501.5" cy="416.2" r="4.9"/><circle cx="421.8" cy="386.4" r="5.4"/><circle cx="433.4" cy="367.4" r="5.5"/><circle cx="454.1" cy="431.3" r="5.1"/><circle cx="462.3" cy="352.6" r="5.6"/><circle cx="430.0" cy="361.3" r="5.8"/><circle cx="471.4" cy="379.3" r="5.2"/><circle cx="477.6" cy="421.4" r="6.3"/><circle cx="415.2" cy="379.8" r="5.6"/><circle cx="418.0" cy="368.0" r="5.6"/><circle cx="417.8" cy="372.1" r="5.2"/><circle cx="463.2" cy="450.8" r="5.0"/><circle cx="449.4" cy="410.9" r="5.8"/><circle cx="472.2" cy="450.1" r="5.2"/><circle cx="461.9" cy="344.0" r="5.4"/><circle cx="491.0" cy="443.1" r="5.9"/><circle cx="424.3" cy="378.9" r="5.7"/><circle cx="488.5" cy="436.2" r="5.0"/><circle cx="438.1" cy="422.8" r="6.3"/><circle cx="506.2" cy="387.7" r="5.0"/><circle cx="506.6" cy="427.3" r="5.2"/><circle cx="437.7" cy="351.3" r="5.4"/><circle cx="453.5" cy="402.1" r="5.0"/><circle cx="493.7" cy="408.7" r="6.0"/><circle cx="437.9" cy="408.5" r="5.2"/><circle cx="539.8" cy="387.5" r="5.1"/><circle cx="465.6" cy="423.7" r="6.2"/><circle cx="498.1" cy="442.8" r="4.9"/><circle cx="453.3" cy="445.2" r="5.4"/><circle cx="490.7" cy="430.8" r="5.7"/><circle cx="503.8" cy="422.2" r="5.2"/><circle cx="444.2" cy="445.6" r="5.6"/><circle cx="457.0" cy="424.2" r="5.8"/><circle cx="482.2" cy="378.4" r="5.5"/><circle cx="436.3" cy="347.2" r="5.6"/><circle cx="490.5" cy="416.5" r="5.5"/><circle cx="429.5" cy="387.1" r="6.2"/><circle cx="450.0" cy="424.1" r="5.5"/><circle cx="427.9" cy="344.7" r="6.0"/><circle cx="441.9" cy="457.9" r="6.0"/><circle cx="437.1" cy="417.0" r="5.0"/><circle cx="434.6" cy="402.6" r="5.2"/><circle cx="497.8" cy="428.8" r="6.1"/><circle cx="485.0" cy="343.8" r="6.2"/><circle cx="478.8" cy="338.5" r="5.9"/><circle cx="433.9" cy="427.9" r="6.2"/><circle cx="497.8" cy="434.5" r="5.9"/><circle cx="427.6" cy="444.4" r="4.9"/><circle cx="485.4" cy="417.8" r="5.4"/><circle cx="422.0" cy="365.8" r="6.1"/><circle cx="449.2" cy="452.2" r="5.5"/><circle cx="427.8" cy="399.5" r="5.5"/></g><g fill="url(#sgreenR3)"><circle cx="441.6" cy="402.0" r="5.2"/><circle cx="447.4" cy="437.9" r="6.0"/><circle cx="430.0" cy="427.3" r="6.1"/><circle cx="498.1" cy="421.6" r="6.2"/><circle cx="428.7" cy="375.8" r="5.7"/><circle cx="460.2" cy="416.1" r="5.5"/><circle cx="490.3" cy="407.3" r="5.6"/><circle cx="443.4" cy="413.2" r="6.4"/><circle cx="417.4" cy="407.0" r="6.2"/><circle cx="425.7" cy="408.9" r="5.1"/><circle cx="454.5" cy="408.2" r="5.2"/><circle cx="484.5" cy="373.8" r="5.9"/><circle cx="475.6" cy="373.6" r="5.6"/></g><polygon points="508,436 522,433 530,441 532,456 525,460 522,479 516,500 494,505 478,514 457,508 434,495 431,458 457,458 476,453 496,447" fill="#31283f"/><g fill="url(#spurpleR0)"><circle cx="477.0" cy="493.8" r="5.1"/><circle cx="470.1" cy="502.8" r="5.4"/><circle cx="507.0" cy="466.2" r="5.0"/><circle cx="452.3" cy="469.7" r="5.8"/><circle cx="459.7" cy="465.8" r="4.9"/><circle cx="454.7" cy="461.2" r="5.0"/><circle cx="528.9" cy="448.2" r="4.9"/><circle cx="449.1" cy="459.8" r="6.0"/><circle cx="466.7" cy="480.5" r="6.0"/><circle cx="459.9" cy="480.4" r="5.0"/><circle cx="505.3" cy="455.5" r="4.7"/><circle cx="462.1" cy="462.9" r="5.6"/><circle cx="502.7" cy="476.1" r="5.7"/><circle cx="512.7" cy="458.7" r="5.1"/><circle cx="464.9" cy="486.5" r="4.8"/><circle cx="514.9" cy="465.8" r="6.0"/></g><g fill="url(#spurpleR1)"><circle cx="476.2" cy="455.9" r="6.1"/><circle cx="496.9" cy="451.8" r="4.8"/><circle cx="471.5" cy="459.6" r="6.1"/><circle cx="470.1" cy="486.6" r="5.4"/><circle cx="489.3" cy="467.6" r="5.8"/><circle cx="497.3" cy="488.0" r="5.1"/><circle cx="484.8" cy="486.8" r="5.6"/><circle cx="497.1" cy="501.7" r="5.1"/><circle cx="503.2" cy="462.6" r="5.4"/><circle cx="473.8" cy="479.3" r="4.8"/><circle cx="465.1" cy="466.6" r="5.8"/><circle cx="443.1" cy="494.9" r="5.1"/><circle cx="456.6" cy="476.8" r="5.7"/><circle cx="484.0" cy="508.5" r="5.4"/><circle cx="490.2" cy="480.8" r="5.3"/><circle cx="455.2" cy="503.2" r="5.6"/><circle cx="482.7" cy="467.1" r="5.6"/><circle cx="488.8" cy="460.8" r="5.2"/><circle cx="520.6" cy="466.8" r="6.1"/><circle cx="504.7" cy="446.6" r="5.1"/><circle cx="438.0" cy="487.8" r="6.0"/><circle cx="516.8" cy="452.3" r="4.8"/><circle cx="477.3" cy="458.7" r="5.0"/><circle cx="487.8" cy="503.4" r="5.3"/><circle cx="520.9" cy="441.1" r="6.1"/><circle cx="476.7" cy="504.2" r="6.0"/><circle cx="488.9" cy="476.1" r="5.2"/><circle cx="477.1" cy="476.7" r="5.9"/><circle cx="495.0" cy="474.3" r="5.2"/><circle cx="516.7" cy="458.9" r="5.4"/><circle cx="481.1" cy="480.4" r="5.3"/><circle cx="461.8" cy="500.6" r="5.3"/><circle cx="505.2" cy="441.6" r="5.8"/><circle cx="434.0" cy="480.0" r="4.8"/><circle cx="489.5" cy="451.8" r="5.1"/><circle cx="511.3" cy="475.6" r="5.1"/><circle cx="512.2" cy="488.1" r="4.9"/><circle cx="513.9" cy="441.9" r="6.2"/><circle cx="498.0" cy="470.0" r="5.6"/><circle cx="437.2" cy="493.3" r="5.5"/><circle cx="512.2" cy="445.7" r="5.4"/><circle cx="484.7" cy="453.0" r="4.8"/><circle cx="441.1" cy="480.4" r="5.2"/><circle cx="464.3" cy="476.4" r="6.0"/><circle cx="449.0" cy="472.9" r="6.0"/><circle cx="516.7" cy="448.5" r="5.0"/><circle cx="524.6" cy="453.6" r="5.5"/></g><g fill="url(#spurpleR2)"><circle cx="495.8" cy="448.8" r="5.6"/><circle cx="447.4" cy="500.3" r="5.1"/><circle cx="460.1" cy="497.1" r="5.4"/><circle cx="481.5" cy="493.9" r="4.9"/><circle cx="479.3" cy="490.2" r="6.1"/><circle cx="474.0" cy="510.9" r="5.1"/><circle cx="515.9" cy="483.3" r="5.1"/><circle cx="471.8" cy="474.2" r="5.5"/><circle cx="500.9" cy="482.7" r="5.5"/><circle cx="520.9" cy="475.3" r="5.1"/><circle cx="501.2" cy="489.9" r="5.3"/><circle cx="465.8" cy="495.7" r="5.3"/><circle cx="505.1" cy="494.8" r="6.2"/><circle cx="449.1" cy="480.1" r="5.5"/><circle cx="432.4" cy="461.0" r="5.2"/><circle cx="456.3" cy="489.2" r="6.1"/><circle cx="442.3" cy="466.8" r="5.9"/><circle cx="474.8" cy="468.0" r="5.9"/><circle cx="447.4" cy="489.4" r="5.6"/><circle cx="440.8" cy="475.7" r="6.2"/><circle cx="453.3" cy="495.6" r="6.0"/><circle cx="437.0" cy="469.8" r="5.2"/><circle cx="491.5" cy="495.9" r="6.0"/><circle cx="513.7" cy="493.6" r="5.4"/><circle cx="440.7" cy="460.9" r="5.4"/><circle cx="506.2" cy="482.1" r="5.0"/></g><g fill="url(#spurpleR3)"><circle cx="498.6" cy="495.9" r="5.8"/></g><polygon points="389,520 391,532 401,540 426,546 442,539 455,536 464,518 460,507 451,501 430,498 410,505" fill="#203422"/><g fill="url(#sgreenB0)"><circle cx="457.0" cy="505.4" r="5.6"/><circle cx="406.1" cy="510.6" r="5.5"/><circle cx="450.8" cy="506.4" r="5.9"/><circle cx="428.5" cy="525.1" r="5.6"/><circle cx="403.0" cy="521.3" r="4.6"/><circle cx="416.8" cy="521.2" r="5.3"/><circle cx="430.4" cy="513.6" r="4.8"/><circle cx="432.3" cy="521.1" r="5.2"/><circle cx="454.6" cy="509.7" r="5.9"/><circle cx="408.2" cy="518.3" r="5.9"/><circle cx="405.8" cy="525.4" r="4.7"/><circle cx="411.1" cy="523.8" r="4.8"/></g><g fill="url(#sgreenB1)"><circle cx="435.0" cy="499.2" r="5.5"/><circle cx="441.5" cy="518.7" r="4.9"/><circle cx="449.4" cy="520.9" r="5.2"/><circle cx="444.3" cy="511.0" r="5.4"/><circle cx="412.6" cy="514.2" r="6.1"/><circle cx="423.3" cy="532.8" r="5.2"/><circle cx="438.9" cy="510.4" r="5.3"/><circle cx="409.4" cy="533.1" r="5.8"/><circle cx="436.4" cy="526.8" r="5.1"/><circle cx="424.7" cy="504.3" r="5.1"/><circle cx="451.3" cy="535.1" r="5.9"/><circle cx="391.3" cy="530.7" r="5.0"/><circle cx="434.9" cy="532.3" r="4.8"/><circle cx="456.6" cy="519.4" r="5.5"/><circle cx="399.5" cy="532.4" r="5.0"/><circle cx="423.3" cy="513.8" r="4.8"/><circle cx="423.1" cy="521.1" r="4.9"/></g><g fill="url(#sgreenB2)"><circle cx="440.6" cy="503.7" r="5.1"/><circle cx="406.5" cy="540.7" r="6.1"/><circle cx="393.3" cy="517.4" r="6.1"/><circle cx="419.4" cy="525.6" r="6.0"/><circle cx="417.5" cy="502.6" r="5.0"/><circle cx="417.2" cy="531.4" r="5.7"/><circle cx="395.5" cy="527.3" r="5.1"/><circle cx="431.5" cy="505.1" r="6.3"/><circle cx="440.7" cy="534.6" r="5.6"/><circle cx="455.8" cy="533.3" r="5.2"/><circle cx="429.1" cy="538.1" r="5.1"/><circle cx="452.7" cy="523.9" r="5.4"/><circle cx="445.2" cy="523.5" r="6.1"/></g><g fill="url(#sgreenB3)"><circle cx="419.6" cy="541.6" r="5.4"/><circle cx="414.6" cy="539.0" r="5.6"/></g><polygon points="262,425 280,416 297,440 334,452 360,453 385,470 410,468 423,455 437,458 431,470 434,495 448,510 445,519 430,525 423,538 414,544 402,538 392,525 380,522 365,525 340,516 334,539 324,546 310,539 302,533 295,562 292,571 276,575 266,587 257,591 266,584 273,578 273,555 282,546 289,536 289,510 279,488 266,475 253,459 250,436" fill="#383840"/><g fill="url(#sgrayB0)"><circle cx="287.9" cy="540.6" r="5.9"/><circle cx="417.0" cy="514.1" r="5.6"/><circle cx="280.3" cy="435.8" r="5.2"/><circle cx="284.6" cy="480.1" r="4.9"/><circle cx="257.0" cy="441.6" r="5.6"/><circle cx="428.7" cy="518.3" r="5.2"/><circle cx="382.6" cy="505.9" r="5.0"/><circle cx="359.5" cy="463.6" r="5.3"/><circle cx="266.8" cy="458.1" r="5.0"/><circle cx="427.4" cy="501.4" r="4.7"/><circle cx="389.2" cy="504.9" r="5.9"/><circle cx="263.1" cy="451.5" r="5.2"/><circle cx="268.3" cy="445.6" r="4.9"/><circle cx="266.6" cy="472.0" r="5.2"/><circle cx="406.0" cy="522.4" r="4.8"/><circle cx="423.9" cy="527.7" r="4.8"/><circle cx="363.6" cy="456.2" r="4.9"/><circle cx="330.4" cy="529.4" r="5.9"/><circle cx="400.0" cy="505.5" r="6.0"/><circle cx="363.9" cy="465.8" r="5.2"/><circle cx="271.9" cy="444.3" r="4.6"/><circle cx="340.3" cy="485.3" r="4.7"/><circle cx="293.9" cy="436.6" r="5.7"/><circle cx="304.9" cy="484.2" r="5.2"/><circle cx="336.2" cy="499.2" r="5.5"/><circle cx="440.9" cy="515.2" r="4.9"/><circle cx="252.0" cy="441.8" r="5.1"/><circle cx="328.8" cy="485.0" r="5.4"/><circle cx="416.2" cy="507.4" r="5.2"/><circle cx="330.1" cy="500.5" r="5.9"/><circle cx="344.3" cy="484.4" r="5.5"/></g><g fill="url(#sgrayB1)"><circle cx="281.5" cy="483.7" r="5.0"/><circle cx="337.1" cy="513.3" r="6.0"/><circle cx="413.3" cy="466.7" r="5.2"/><circle cx="315.9" cy="497.8" r="5.7"/><circle cx="289.7" cy="470.0" r="4.9"/><circle cx="287.7" cy="434.7" r="5.9"/><circle cx="353.2" cy="458.2" r="5.5"/><circle cx="299.8" cy="501.0" r="5.2"/><circle cx="424.1" cy="464.6" r="4.8"/><circle cx="396.2" cy="485.8" r="5.9"/><circle cx="278.0" cy="562.1" r="5.2"/><circle cx="347.9" cy="490.8" r="6.0"/><circle cx="313.6" cy="455.9" r="4.8"/><circle cx="332.0" cy="473.8" r="6.1"/><circle cx="272.2" cy="457.6" r="5.2"/><circle cx="288.7" cy="457.9" r="5.8"/><circle cx="389.9" cy="493.9" r="5.3"/><circle cx="264.7" cy="429.9" r="6.0"/><circle cx="355.9" cy="479.0" r="5.3"/><circle cx="395.7" cy="512.1" r="6.1"/><circle cx="302.1" cy="491.4" r="5.0"/><circle cx="333.7" cy="477.3" r="5.0"/><circle cx="292.6" cy="449.6" r="5.7"/><circle cx="401.9" cy="527.9" r="5.0"/><circle cx="335.3" cy="463.2" r="6.0"/><circle cx="363.7" cy="485.7" r="5.0"/><circle cx="272.1" cy="474.0" r="6.0"/><circle cx="419.7" cy="508.1" r="4.9"/><circle cx="348.7" cy="479.5" r="5.4"/><circle cx="437.7" cy="521.2" r="6.0"/><circle cx="324.7" cy="493.3" r="5.0"/><circle cx="320.2" cy="485.6" r="5.5"/><circle cx="324.5" cy="479.8" r="5.6"/><circle cx="374.1" cy="506.2" r="4.9"/><circle cx="318.4" cy="453.0" r="5.5"/><circle cx="371.5" cy="513.2" r="5.7"/><circle cx="261.4" cy="437.3" r="5.3"/><circle cx="286.2" cy="563.3" r="5.8"/><circle cx="410.4" cy="499.8" r="5.4"/><circle cx="271.2" cy="462.9" r="5.0"/><circle cx="348.3" cy="469.6" r="5.6"/><circle cx="425.3" cy="473.1" r="5.2"/><circle cx="302.1" cy="476.7" r="5.1"/><circle cx="282.9" cy="459.4" r="5.3"/><circle cx="386.8" cy="498.7" r="5.6"/><circle cx="426.5" cy="513.4" r="6.0"/><circle cx="252.0" cy="451.1" r="5.8"/><circle cx="270.4" cy="439.0" r="5.2"/><circle cx="291.6" cy="535.5" r="6.0"/><circle cx="320.4" cy="459.3" r="5.4"/><circle cx="432.3" cy="511.7" r="6.1"/><circle cx="302.3" cy="505.9" r="5.9"/><circle cx="365.5" cy="494.7" r="4.8"/><circle cx="435.6" cy="497.2" r="5.0"/><circle cx="307.2" cy="469.4" r="5.9"/><circle cx="325.0" cy="464.6" r="5.9"/><circle cx="402.2" cy="484.7" r="5.1"/><circle cx="299.1" cy="529.2" r="4.9"/><circle cx="408.0" cy="471.2" r="5.6"/><circle cx="429.8" cy="507.9" r="5.5"/><circle cx="252.3" cy="438.2" r="5.0"/><circle cx="322.9" cy="525.8" r="5.9"/><circle cx="402.5" cy="513.3" r="5.0"/><circle cx="363.8" cy="511.5" r="5.4"/><circle cx="319.9" cy="542.9" r="5.8"/><circle cx="281.6" cy="432.1" r="5.9"/><circle cx="296.7" cy="541.2" r="5.6"/><circle cx="282.1" cy="471.6" r="6.0"/><circle cx="357.7" cy="507.7" r="5.5"/><circle cx="339.2" cy="457.2" r="5.2"/><circle cx="255.8" cy="458.3" r="4.8"/><circle cx="317.9" cy="507.5" r="5.7"/><circle cx="287.7" cy="570.1" r="5.9"/><circle cx="295.2" cy="508.7" r="5.5"/><circle cx="351.6" cy="466.0" r="5.8"/><circle cx="307.5" cy="499.1" r="5.2"/><circle cx="269.3" cy="476.4" r="5.5"/><circle cx="321.8" cy="513.1" r="4.8"/><circle cx="313.3" cy="485.9" r="5.6"/><circle cx="297.5" cy="456.1" r="5.2"/><circle cx="318.2" cy="490.7" r="6.0"/><circle cx="405.7" cy="535.1" r="5.9"/><circle cx="404.4" cy="480.8" r="5.1"/><circle cx="355.8" cy="469.4" r="4.8"/><circle cx="405.1" cy="492.2" r="5.9"/><circle cx="341.5" cy="478.6" r="5.4"/><circle cx="281.8" cy="443.2" r="5.9"/><circle cx="375.2" cy="476.6" r="5.0"/><circle cx="259.7" cy="463.8" r="5.0"/><circle cx="388.0" cy="473.5" r="4.8"/><circle cx="396.1" cy="498.1" r="5.2"/><circle cx="301.0" cy="450.9" r="5.7"/><circle cx="334.6" cy="494.8" r="6.1"/><circle cx="331.9" cy="455.9" r="5.1"/><circle cx="386.8" cy="512.1" r="6.1"/><circle cx="316.8" cy="465.9" r="5.8"/><circle cx="284.1" cy="568.4" r="6.0"/><circle cx="343.9" cy="455.9" r="6.0"/><circle cx="288.8" cy="483.6" r="5.5"/><circle cx="366.3" cy="480.2" r="5.3"/><circle cx="380.3" cy="473.4" r="6.1"/><circle cx="323.3" cy="500.2" r="4.8"/><circle cx="288.7" cy="500.3" r="6.0"/><circle cx="383.4" cy="493.9" r="6.0"/><circle cx="400.1" cy="480.4" r="5.1"/><circle cx="308.1" cy="476.8" r="6.2"/><circle cx="353.5" cy="487.1" r="5.3"/><circle cx="288.4" cy="450.1" r="5.8"/><circle cx="376.9" cy="515.8" r="5.0"/><circle cx="350.5" cy="507.2" r="4.9"/></g><g fill="url(#sgrayB2)"><circle cx="379.1" cy="483.4" r="5.8"/><circle cx="327.7" cy="536.3" r="5.4"/><circle cx="320.3" cy="477.5" r="5.5"/><circle cx="333.6" cy="521.5" r="6.0"/><circle cx="291.6" cy="553.9" r="6.3"/><circle cx="395.7" cy="522.0" r="6.0"/><circle cx="280.0" cy="476.3" r="5.5"/><circle cx="297.1" cy="470.5" r="5.6"/><circle cx="408.1" cy="488.0" r="5.9"/><circle cx="401.3" cy="471.4" r="5.5"/><circle cx="286.3" cy="494.0" r="5.4"/><circle cx="312.3" cy="532.8" r="6.1"/><circle cx="310.9" cy="522.6" r="5.3"/><circle cx="356.5" cy="492.3" r="5.9"/><circle cx="423.7" cy="478.4" r="4.9"/><circle cx="403.8" cy="501.2" r="5.9"/><circle cx="336.5" cy="526.9" r="5.9"/><circle cx="434.5" cy="457.9" r="5.3"/><circle cx="303.8" cy="445.4" r="5.0"/><circle cx="424.6" cy="487.6" r="5.5"/><circle cx="286.9" cy="548.1" r="6.1"/><circle cx="329.8" cy="513.9" r="5.2"/><circle cx="318.3" cy="521.3" r="6.2"/><circle cx="343.9" cy="505.6" r="5.1"/><circle cx="301.0" cy="518.4" r="6.2"/><circle cx="320.4" cy="471.9" r="5.6"/><circle cx="355.8" cy="499.8" r="5.4"/><circle cx="408.2" cy="506.0" r="5.8"/><circle cx="314.6" cy="473.9" r="6.2"/><circle cx="355.8" cy="519.8" r="5.1"/><circle cx="384.1" cy="518.9" r="5.5"/><circle cx="292.6" cy="494.6" r="6.0"/><circle cx="391.4" cy="520.9" r="6.2"/><circle cx="342.3" cy="463.7" r="5.5"/><circle cx="350.8" cy="519.2" r="5.6"/><circle cx="421.3" cy="491.5" r="5.4"/><circle cx="378.3" cy="497.2" r="6.2"/><circle cx="319.0" cy="532.2" r="5.2"/><circle cx="307.5" cy="513.0" r="5.4"/><circle cx="286.5" cy="466.7" r="6.3"/><circle cx="354.5" cy="513.2" r="5.2"/><circle cx="369.9" cy="486.4" r="5.9"/><circle cx="347.4" cy="497.9" r="5.6"/><circle cx="381.0" cy="480.1" r="5.5"/><circle cx="313.0" cy="525.8" r="5.8"/><circle cx="414.7" cy="534.6" r="5.4"/><circle cx="361.6" cy="499.0" r="5.3"/><circle cx="276.1" cy="569.7" r="5.8"/><circle cx="363.8" cy="520.6" r="5.9"/><circle cx="371.2" cy="500.4" r="6.1"/><circle cx="276.7" cy="422.4" r="5.6"/><circle cx="293.0" cy="464.3" r="5.1"/><circle cx="309.4" cy="466.3" r="5.4"/><circle cx="414.6" cy="493.8" r="5.0"/><circle cx="397.7" cy="494.9" r="5.9"/><circle cx="292.1" cy="549.6" r="5.0"/><circle cx="416.3" cy="487.7" r="5.8"/><circle cx="372.1" cy="521.4" r="5.4"/><circle cx="307.5" cy="528.2" r="5.9"/><circle cx="391.2" cy="477.1" r="5.7"/><circle cx="435.8" cy="506.6" r="6.2"/><circle cx="419.6" cy="529.6" r="5.9"/><circle cx="301.7" cy="465.8" r="5.0"/><circle cx="271.9" cy="421.0" r="5.4"/><circle cx="300.2" cy="534.4" r="5.6"/><circle cx="431.6" cy="480.4" r="5.9"/><circle cx="387.5" cy="483.8" r="5.4"/><circle cx="279.0" cy="465.7" r="5.7"/><circle cx="424.3" cy="532.4" r="5.4"/><circle cx="311.6" cy="450.4" r="5.8"/><circle cx="311.8" cy="512.4" r="5.2"/><circle cx="305.5" cy="459.1" r="5.1"/><circle cx="282.6" cy="556.7" r="5.2"/><circle cx="298.7" cy="512.3" r="5.8"/><circle cx="432.4" cy="465.4" r="5.1"/><circle cx="279.4" cy="573.7" r="5.9"/><circle cx="363.7" cy="506.6" r="5.2"/><circle cx="344.7" cy="514.7" r="6.1"/><circle cx="291.7" cy="513.6" r="5.4"/><circle cx="374.4" cy="492.7" r="5.7"/><circle cx="308.5" cy="504.6" r="6.0"/><circle cx="426.3" cy="456.7" r="5.5"/><circle cx="284.9" cy="423.1" r="5.0"/><circle cx="293.8" cy="477.7" r="5.0"/></g><g fill="url(#sgrayB3)"><circle cx="415.7" cy="471.3" r="5.3"/><circle cx="419.8" cy="497.8" r="5.8"/><circle cx="332.4" cy="535.9" r="6.1"/><circle cx="324.8" cy="519.9" r="5.6"/><circle cx="331.1" cy="539.9" r="5.9"/><circle cx="337.0" cy="470.9" r="5.5"/><circle cx="412.0" cy="540.0" r="6.3"/><circle cx="274.3" cy="430.6" r="5.5"/><circle cx="414.3" cy="476.5" r="6.1"/><circle cx="296.7" cy="486.6" r="5.3"/><circle cx="292.1" cy="520.9" r="6.3"/></g><polygon points="247,504 257,497 260,502 250,517 244,536 237,549 228,571 218,587 205,607 192,623 179,616 168,607 170,600 182,591 195,581 202,565 215,552 224,539 231,517 237,513" fill="#2d3245"/><g fill="url(#sblue0)"><circle cx="220.1" cy="572.8" r="5.1"/><circle cx="242.8" cy="517.2" r="5.1"/><circle cx="200.8" cy="610.8" r="5.4"/><circle cx="185.3" cy="595.4" r="6.0"/><circle cx="229.1" cy="560.7" r="5.7"/></g><g fill="url(#sblue1)"><circle cx="194.9" cy="585.5" r="5.4"/><circle cx="182.4" cy="616.0" r="5.4"/><circle cx="189.7" cy="594.6" r="4.9"/><circle cx="185.6" cy="600.2" r="5.5"/><circle cx="210.3" cy="585.2" r="5.2"/><circle cx="193.6" cy="617.0" r="5.7"/><circle cx="253.9" cy="505.2" r="5.0"/><circle cx="214.6" cy="580.8" r="5.4"/><circle cx="249.4" cy="511.7" r="5.8"/><circle cx="206.1" cy="602.3" r="5.0"/><circle cx="197.6" cy="601.9" r="5.3"/><circle cx="217.4" cy="568.1" r="4.9"/><circle cx="183.7" cy="608.7" r="5.7"/><circle cx="185.9" cy="613.5" r="5.1"/><circle cx="181.1" cy="601.2" r="6.0"/><circle cx="175.5" cy="607.1" r="5.7"/><circle cx="222.0" cy="567.6" r="5.9"/><circle cx="235.6" cy="519.6" r="6.0"/><circle cx="209.2" cy="594.8" r="5.0"/><circle cx="207.6" cy="578.5" r="5.8"/><circle cx="191.5" cy="607.3" r="5.5"/><circle cx="171.5" cy="601.2" r="5.5"/></g><g fill="url(#sblue2)"><circle cx="215.2" cy="554.2" r="5.7"/><circle cx="200.7" cy="593.4" r="5.0"/><circle cx="234.5" cy="532.2" r="5.4"/><circle cx="203.2" cy="572.9" r="5.6"/><circle cx="258.4" cy="503.7" r="5.4"/><circle cx="206.7" cy="565.2" r="6.1"/><circle cx="228.4" cy="531.2" r="4.9"/><circle cx="205.0" cy="588.5" r="5.2"/><circle cx="233.1" cy="525.5" r="5.2"/><circle cx="232.7" cy="553.9" r="5.3"/><circle cx="202.3" cy="579.8" r="6.2"/><circle cx="212.4" cy="561.3" r="5.9"/><circle cx="225.3" cy="550.9" r="5.0"/><circle cx="210.3" cy="571.6" r="5.2"/><circle cx="246.1" cy="523.2" r="5.0"/><circle cx="219.5" cy="558.0" r="6.3"/></g><g fill="url(#sblue3)"><circle cx="243.3" cy="531.9" r="6.4"/><circle cx="236.4" cy="547.9" r="5.9"/><circle cx="197.7" cy="575.2" r="6.3"/><circle cx="228.7" cy="544.2" r="6.3"/><circle cx="231.5" cy="537.4" r="6.1"/><circle cx="238.0" cy="526.5" r="6.1"/></g><polygon points="257,497 260,502 250,517 244,536 237,549 228,571 218,587 205,607 192,623 192,639 205,655 215,652 221,639 234,626 240,613 244,594 266,584 273,578 273,555 282,546 289,536 289,510 279,488 266,475" fill="#422b42"/><g fill="url(#spinkL20)"><circle cx="224.3" cy="600.8" r="5.9"/><circle cx="282.7" cy="536.6" r="5.1"/><circle cx="209.8" cy="646.7" r="5.3"/><circle cx="207.3" cy="642.8" r="4.7"/><circle cx="192.1" cy="630.3" r="5.0"/><circle cx="217.7" cy="592.1" r="5.0"/><circle cx="256.1" cy="529.7" r="5.0"/><circle cx="199.9" cy="627.0" r="4.8"/><circle cx="276.0" cy="510.6" r="5.1"/><circle cx="281.5" cy="504.0" r="5.6"/><circle cx="195.9" cy="621.4" r="5.4"/><circle cx="202.7" cy="634.4" r="5.3"/></g><g fill="url(#spinkL21)"><circle cx="244.1" cy="536.1" r="6.0"/><circle cx="200.9" cy="643.2" r="5.3"/><circle cx="260.6" cy="535.3" r="6.1"/><circle cx="265.7" cy="537.7" r="5.0"/><circle cx="237.3" cy="606.0" r="5.2"/><circle cx="267.9" cy="553.7" r="5.4"/><circle cx="231.6" cy="571.7" r="5.9"/><circle cx="240.5" cy="585.5" r="4.8"/><circle cx="281.8" cy="511.5" r="5.6"/><circle cx="218.5" cy="608.9" r="4.8"/><circle cx="261.5" cy="509.7" r="6.1"/><circle cx="282.1" cy="531.7" r="5.0"/><circle cx="231.6" cy="588.4" r="6.0"/><circle cx="267.2" cy="508.6" r="5.9"/><circle cx="237.7" cy="591.2" r="5.4"/><circle cx="234.1" cy="560.3" r="5.1"/><circle cx="252.1" cy="521.5" r="5.3"/><circle cx="237.2" cy="577.4" r="5.7"/><circle cx="252.4" cy="579.4" r="5.0"/><circle cx="228.1" cy="591.1" r="5.3"/><circle cx="202.5" cy="651.2" r="5.2"/><circle cx="265.7" cy="515.4" r="5.2"/><circle cx="230.1" cy="598.3" r="4.8"/><circle cx="258.4" cy="570.5" r="5.5"/><circle cx="270.4" cy="519.0" r="5.9"/><circle cx="226.9" cy="579.4" r="5.2"/><circle cx="266.1" cy="544.3" r="5.4"/><circle cx="243.5" cy="578.6" r="5.4"/><circle cx="278.4" cy="545.2" r="4.8"/><circle cx="261.8" cy="563.9" r="6.1"/><circle cx="286.8" cy="532.5" r="5.2"/><circle cx="266.3" cy="570.3" r="5.7"/><circle cx="210.8" cy="608.3" r="5.8"/><circle cx="219.8" cy="619.4" r="5.3"/><circle cx="228.8" cy="607.9" r="5.7"/><circle cx="206.2" cy="608.7" r="5.9"/><circle cx="250.4" cy="531.2" r="6.1"/><circle cx="210.0" cy="632.8" r="5.3"/><circle cx="271.6" cy="500.9" r="5.9"/><circle cx="222.2" cy="587.0" r="5.8"/><circle cx="214.5" cy="601.8" r="5.0"/></g><g fill="url(#spinkL22)"><circle cx="262.8" cy="530.2" r="6.2"/><circle cx="247.8" cy="547.0" r="5.5"/><circle cx="239.9" cy="599.1" r="5.1"/><circle cx="270.4" cy="571.7" r="4.9"/><circle cx="270.1" cy="497.6" r="5.8"/><circle cx="252.7" cy="564.3" r="5.5"/><circle cx="259.1" cy="551.8" r="5.0"/><circle cx="259.5" cy="577.2" r="5.8"/><circle cx="222.7" cy="613.3" r="5.0"/><circle cx="229.9" cy="615.8" r="5.6"/><circle cx="242.1" cy="570.6" r="5.4"/><circle cx="265.8" cy="476.8" r="5.5"/><circle cx="272.8" cy="486.8" r="6.1"/><circle cx="266.5" cy="565.5" r="5.2"/><circle cx="216.5" cy="640.3" r="5.2"/><circle cx="254.3" cy="584.4" r="5.6"/><circle cx="261.6" cy="502.6" r="6.3"/><circle cx="258.1" cy="519.1" r="6.2"/><circle cx="282.2" cy="515.7" r="5.8"/><circle cx="276.0" cy="522.1" r="6.0"/><circle cx="281.9" cy="524.4" r="6.2"/><circle cx="254.2" cy="536.0" r="6.1"/><circle cx="245.4" cy="564.7" r="5.9"/><circle cx="262.5" cy="556.3" r="5.9"/><circle cx="257.2" cy="542.5" r="6.3"/><circle cx="216.3" cy="630.2" r="5.9"/><circle cx="248.9" cy="584.2" r="5.1"/><circle cx="236.2" cy="565.8" r="6.1"/><circle cx="221.0" cy="636.1" r="5.5"/><circle cx="275.1" cy="535.3" r="6.1"/><circle cx="210.1" cy="628.8" r="5.5"/><circle cx="288.1" cy="516.4" r="5.2"/><circle cx="269.4" cy="525.8" r="6.0"/><circle cx="271.8" cy="543.4" r="4.9"/><circle cx="273.5" cy="531.2" r="6.2"/><circle cx="205.8" cy="619.5" r="5.1"/><circle cx="255.3" cy="560.0" r="5.5"/><circle cx="267.5" cy="481.3" r="6.2"/><circle cx="197.9" cy="634.5" r="5.2"/><circle cx="246.5" cy="571.1" r="6.0"/><circle cx="213.8" cy="619.1" r="5.8"/><circle cx="260.0" cy="494.7" r="5.8"/><circle cx="259.7" cy="524.4" r="6.3"/><circle cx="228.5" cy="619.7" r="5.9"/><circle cx="261.7" cy="489.4" r="5.4"/><circle cx="268.1" cy="578.9" r="5.0"/><circle cx="215.1" cy="616.1" r="5.7"/><circle cx="247.6" cy="556.2" r="5.5"/></g><g fill="url(#spinkL23)"><circle cx="239.0" cy="556.6" r="5.9"/><circle cx="222.8" cy="626.7" r="5.9"/><circle cx="250.1" cy="553.5" r="5.5"/><circle cx="232.9" cy="626.0" r="5.9"/><circle cx="274.5" cy="493.6" r="5.4"/><circle cx="206.6" cy="612.7" r="6.3"/><circle cx="237.5" cy="549.3" r="5.5"/><circle cx="244.4" cy="553.0" r="6.1"/></g><filter id="bl" x="-50%" y="-50%" width="200%" height="200%"><feGaussianBlur stdDeviation="7"/></filter><ellipse cx="433" cy="405" rx="16" ry="46" fill="#000" opacity="0.3" filter="url(#bl)"/><ellipse cx="424" cy="318" rx="16" ry="26" fill="#000" opacity="0.35" filter="url(#bl)"/><ellipse cx="300" cy="420" rx="20" ry="14" fill="#000" opacity="0.2" filter="url(#bl)"/></svg></div>
 <div id="log" class="a">
  <style>
#log table{position:absolute;border-collapse:collapse;font-family:"Liberation Serif",serif;font-size:16px;color:#000}
#log td,#log th{border:2px solid #555;height:28px;padding:0 3px;white-space:nowrap;line-height:18px}
#log a{color:#0000ee;text-decoration:underline}
#log th{font-weight:bold;text-align:center}
#log .c{text-align:center}
</style>
<table style="left:9px;top:13px;width:474px">
 <tr><td class="c" style="width:52px"><a>N</a></td><td class="c" style="width:288px"><a>Extracellular hemoglobin linker L2 subunit</a></td><td class="c"><a>Q2I743_LUMTE</a></td></tr>
 <tr><td class="c"><a>O</a></td><td class="c"><a>Extracellular hemoglobin linker L3 subunit</a></td><td class="c"><a>Q2I742_LUMTE</a></td></tr>
</table>
<table style="left:9px;top:89px;width:340px">
 <tr><th>Non-standard residues in 2gtl #1</th></tr>
 <tr><td><a>CA</a> — <a>calcium ion</a></td></tr>
 <tr><td><a>CMO</a> — <a>carbon monoxide</a></td></tr>
 <tr><td><a>HEM</a> — <a>protoporphyrin IX containing Fe</a> (HEME)</td></tr>
 <tr><td><a>ZN</a> — <a>zinc ion</a></td></tr>
</table>
<table style="left:9px;top:249px;width:275px">
 <tr><th colspan="2">2gtl mmCIF Assemblies</th></tr>
 <tr><td class="c" style="width:18px"><a>1</a></td><td>complete point assembly</td></tr>
 <tr><td class="c"><a>2</a></td><td>point asymmetric unit</td></tr>
 <tr><td class="c"><a>3</a></td><td>point asymmetric unit, std point frame</td></tr>
 <tr><td class="c"><a>4</a></td><td>crystal asymmetric unit</td></tr>
</table>

  <div class="ph a" style="left:0;top:0;height:22px;border-top:1px solid #c6c6c6"><span class="a" style="left:285.5px;width:40px;top:0;text-align:center">Log</span><svg class="a" style="left:0;top:0" width="60" height="22">
   <circle cx="9.5" cy="9.3" r="7" fill="#464646"/>
   <path d="M6.6,6.4 L12.4,12.2 M12.4,6.4 L6.6,12.2" stroke="#fff" stroke-width="1.9"/>
   <circle cx="27.5" cy="9.3" r="7" fill="#464646"/>
   <rect x="23.6" y="9.3" width="5.5" height="4" rx="0.8" fill="none" stroke="#fff" stroke-width="1.2"/>
   <path d="M25.8,7.9 L25.8,6.6 L31.2,6.6 L31.2,10.5 L29.8,10.5" fill="none" stroke="#fff" stroke-width="1.1"/>
  </svg></div>
 </div>
<div id="models" class="a" style="left:704px;top:557px;width:576px;height:156px;background:#e4e4e4">
 <div class="a" style="left:0;top:0;width:576px;height:1.5px;background:#d2d2d2"></div>
 <div class="a ph" style="left:0;top:1px;height:21px;line-height:21px;background:linear-gradient(#e3e3e3,#d1d1d1)"><span class="a" style="left:275.5px;width:60px;top:1.5px;text-align:center">Models</span><svg class="a" style="left:0;top:1.5px" width="60" height="22">
   <circle cx="9.5" cy="9.3" r="7" fill="#464646"/>
   <path d="M6.6,6.4 L12.4,12.2 M12.4,6.4 L6.6,12.2" stroke="#fff" stroke-width="1.9"/>
   <circle cx="27.5" cy="9.3" r="7" fill="#464646"/>
   <rect x="23.6" y="9.3" width="5.5" height="4" rx="0.8" fill="none" stroke="#fff" stroke-width="1.2"/>
   <path d="M25.8,7.9 L25.8,6.6 L31.2,6.6 L31.2,10.5 L29.8,10.5" fill="none" stroke="#fff" stroke-width="1.1"/>
  </svg></div>
 <div class="a" style="left:0;top:22px;width:576px;height:4px;background:#c8c8c8;border-top:1px solid #bdbdbd"></div>
 <div class="a" style="left:0;top:26px;width:496px;height:129px;background:#f2f5f4;border-right:1px solid #cfcfcf"></div>
 <div class="a" style="left:0;top:26px;width:496px;height:17px;background:#e4e4e4"></div>
 <div class="a mh" style="left:5.5px;top:27.5px">Name</div>
 <div class="a mh" style="left:205.5px;top:27.5px">ID</div>
 <div class="a" style="left:200.5px;top:27px;width:1.5px;height:13px;background:#cdcdcd"></div>
 <div class="a" style="left:220.5px;top:27px;width:1.5px;height:13px;background:#cdcdcd"></div>
 <div class="a" style="left:239.5px;top:27px;width:1.5px;height:13px;background:#cdcdcd"></div>
 <div class="a" style="left:268.5px;top:27px;width:1.5px;height:13px;background:#cdcdcd"></div>
 <svg class="a" style="left:0;top:22px" width="300" height="40">
  <path d="M244.6,11 C248.5,6.2 256.5,6.2 260.6,11 C256.5,15.8 248.5,15.8 244.6,11 Z" fill="none" stroke="#111" stroke-width="1.1"/>
  <circle cx="252.6" cy="11" r="2.6" fill="#111"/>
  <path d="M277,13 L276,12 C275,11 277,10 278,11 L279,12 L279,6.5 C279,5.5 281,5.5 281,6.5 L281,11 L284.5,11.5 C286,12 286.5,13 286.5,15 L286,19 L280,19.5 Z" fill="#000"/>
  <circle cx="280.4" cy="6.8" r="3.8" fill="#1ee05a"/>
  <path d="M280.2,6.5 L280.2,12" stroke="#000" stroke-width="1.8"/>
  <path d="M11,26.5 L15,30.5 L11,34.5" fill="none" stroke="#9a9a9a" stroke-width="1.2"/>
 </svg>
 <div class="a" style="left:27px;top:44.5px;font-size:14px;color:#111">2gtl</div>
 <div class="a" style="left:206.5px;top:45.5px;font-size:13.5px;color:#111">1</div>
 <div class="a" style="left:221.8px;top:43.3px;width:16px;height:15.6px;background:#90f090;box-shadow:inset -1px -1px 0 #6aa86a"></div>
 <div class="a" style="left:247.6px;top:45.8px;width:14px;height:14.2px;background:#1a7ef5;border-radius:3.5px"></div>
 <svg class="a" style="left:247.6px;top:45.8px" width="14" height="14"><path d="M3.2,7.3 L6,10.3 L10.8,3.6" fill="none" stroke="#fff" stroke-width="1.8" stroke-linecap="round" stroke-linejoin="round"/></svg>
 <div class="a" style="left:276.5px;top:46px;width:14px;height:14px;background:#f6f6f6;border:1px solid #dcdcdc;border-radius:3.5px"></div>
 <div class="a mb" style="left:505px;top:31.3px">Close</div>
 <div class="a mb" style="left:505px;top:55.3px">Hide</div>
 <div class="a mb" style="left:505px;top:79.3px">Show</div>
 <div class="a mb" style="left:505px;top:103.3px">View</div>
 <div class="a mb" style="left:505px;top:127.3px">Info</div>
</div>
<div id="cmd" class="a" style="left:0;top:713px;width:1280px;height:33px;background:#e6e6e6;border-bottom:1px solid #cfcfcf">
 <div class="a" style="left:2.5px;top:9px;font-size:13px;color:#222">Command:</div>
 <div class="a" style="left:71.7px;top:7.8px;width:1202px;height:19.5px;background:#f2f5f4;border-radius:5px;box-shadow:0 0.5px 1px rgba(0,0,0,0.2)"></div>
 <div class="a" style="left:73px;top:9px;width:47.3px;height:14.8px;background:#a8d0f8"></div>
 <div class="a" style="left:74px;top:9px;font-size:13px;color:#111">del /C,D</div>
 <div class="a" style="left:1255.8px;top:9px;width:16.2px;height:16.2px;background:#1a7ef5;border-radius:4px"></div>
 <svg class="a" style="left:1255.8px;top:9px" width="17" height="17"><path d="M4.8,6.8 L8.1,10 L11.4,6.8" fill="none" stroke="#fff" stroke-width="1.7" stroke-linecap="round"/></svg>
</div>
<div id="status" class="a" style="left:0;top:746px;width:1280px;height:31px;background:linear-gradient(#dadada,#c4c4c4)">
 <div class="a" style="left:2px;top:3px;width:1203px;height:28px;background:#d0d0d0"></div>
 <div class="a" style="left:9.8px;top:5.5px;font-size:16px;color:#111">chain E: Extracellular globin 4</div>
 <div class="a" style="left:1211.5px;top:3.3px;width:25px;height:24.5px;background:#e6e6e6"></div>
 <svg class="a" style="left:1211.5px;top:3.3px" width="25" height="25">
  <rect x="4.5" y="5" width="15" height="15" fill="none" stroke="#222" stroke-width="1.2" stroke-dasharray="1.2,1.2"/>
  <rect x="5" y="5.5" width="6" height="6" fill="#e6e6e6" stroke="#333" stroke-width="1.6"/>
  <path d="M13,14 L17,18" stroke="#22a040" stroke-width="1.2"/>
  <path d="M18.5,19.5 L14.5,18.5 L17.5,15.5 Z" fill="#22a040"/>
 </svg>
 <div class="a" style="left:1243.2px;top:3.3px;width:25px;height:24.5px;background:#e6e6e6"></div>
 <div class="a" style="left:1247.9px;top:8px;width:15.8px;height:15.9px;background:#000080"></div>
 <svg class="a" style="left:1247.9px;top:8px" width="16" height="16"><path d="M13.6,2.4 L5.4,7.6 L8.9,8.4 L2.6,13.8 L11.6,8.2 L8.2,7.3 Z" fill="#f2ee10" stroke="#f2ee10" stroke-width="0.8" stroke-linejoin="round"/></svg>
</div>

</div>
</body></html>
